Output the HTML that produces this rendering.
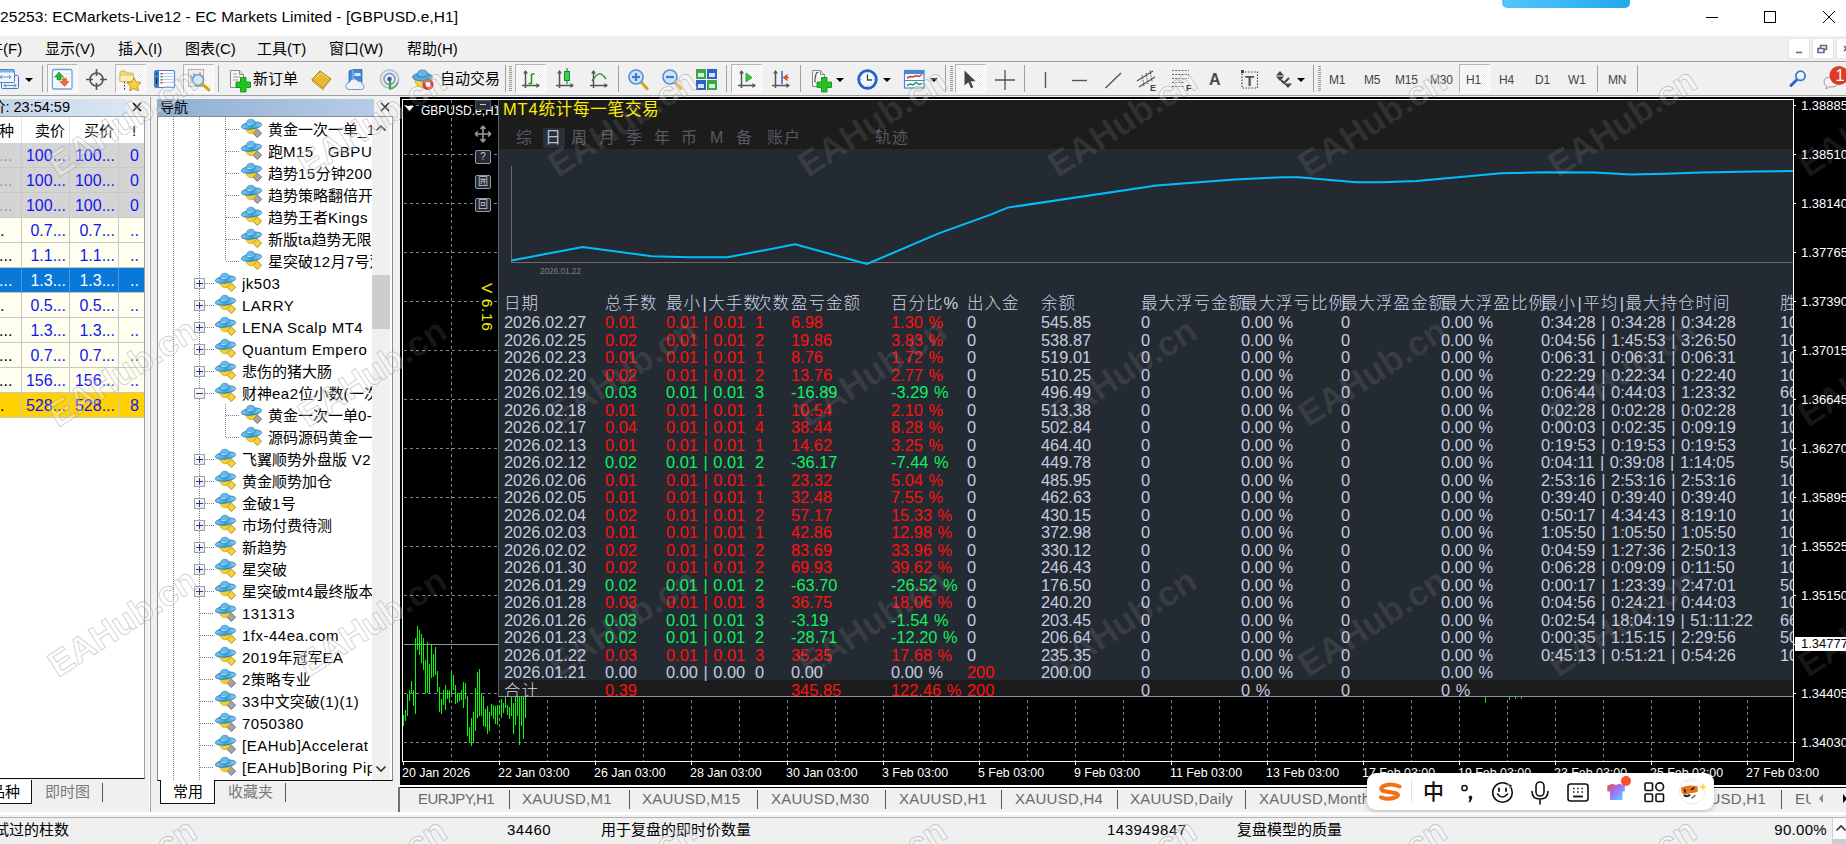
<!DOCTYPE html><html lang="zh"><head><meta charset="utf-8"><title>MT4</title><style>*{box-sizing:border-box;margin:0;padding:0}
html,body{width:1846px;height:844px;overflow:hidden;background:#f0f0f0}
body{font-family:"Liberation Sans","Noto Sans CJK SC",sans-serif;font-size:15px;color:#000}
#root{position:relative;width:1846px;height:844px;overflow:hidden;background:#f0f0f0}
.a{position:absolute;white-space:nowrap}
.t{position:absolute;white-space:nowrap;line-height:20px;height:20px}
svg{position:absolute;overflow:visible}
.pb{background:#f9f9f9;border:1px solid #b5b5b5;border-right-color:#fff;border-bottom-color:#fff;background-image:repeating-conic-gradient(#fff 0 25%,#ededed 0 50%);background-size:2px 2px}
.grip{width:3px;height:26px;background:repeating-linear-gradient(180deg,#9a9a9a 0 1px,transparent 1px 2px)}
.tf{font-size:12px;color:#444;letter-spacing:-0.2px}
.mh{font-size:15px;color:#000}
.mr{font-size:16px}
.tr{font-size:15px;line-height:22px;height:22px}
.vd{width:1px;background:repeating-linear-gradient(180deg,#808080 0 1px,transparent 1px 2px)}
.hd{height:1px;background:repeating-linear-gradient(90deg,#808080 0 1px,transparent 1px 2px)}
.pl{font-size:12px;color:#fff;line-height:16px;height:16px;font-family:"Liberation Sans",sans-serif}
.sb{width:16px;height:14px;border:1px solid #8f9ab0;border-radius:2px;color:#c0c6d4;font-size:10px;line-height:12px;text-align:center;background:#242a32}
.th{font-weight:300;font-size:16.500px;color:#ccd4e8;line-height:20px;letter-spacing:1px;font-family:"Liberation Sans","Noto Sans CJK SC",sans-serif}
.td{word-spacing:1px;font-size:16.400px;line-height:20px;font-family:"Liberation Sans",sans-serif}
.ct{font-size:15px;color:#6a6a6a;line-height:20px;letter-spacing:.25px}
.pr{font-size:13px}
.tm{font-size:12.400px}
.l{letter-spacing:.5px}
.bar{margin:0 .5px 0 1.5px}
</style></head><body><div id="root">
<div class="a" id="titlebar" style="left:0;top:0;width:1846px;height:36px;background:#fff">
  <div class="t" id="ttl" style="left:0;top:7px;font-size:15.5px;color:#000;letter-spacing:.085px">25253: ECMarkets-Live12 - EC Markets Limited - [GBPUSD.e,H1]</div>
  <div class="a" style="left:1502px;top:-6px;width:128px;height:14px;border-radius:5px;background:linear-gradient(90deg,#55c6fb,#1fa9ee)"></div>
  <svg width="140" height="20" style="left:1700px;top:8px" viewBox="0 0 140 20" fill="none" stroke="#000" stroke-width="1">
    <path d="M6 9.5h12"/><rect x="64.5" y="3.5" width="11" height="11"/><path d="M123 3l12 12M135 3l-12 12"/>
  </svg>
</div>

<div class="a" id="menubar" style="left:0;top:36px;width:1846px;height:25px;background:#f0f0f0">
  <div class="t" style="left:-12px;top:3px">件(F)</div>
  <div class="t" style="left:45px;top:3px">显示(V)</div>
  <div class="t" style="left:118px;top:3px">插入(I)</div>
  <div class="t" style="left:185px;top:3px">图表(C)</div>
  <div class="t" style="left:257px;top:3px">工具(T)</div>
  <div class="t" style="left:329px;top:3px">窗口(W)</div>
  <div class="t" style="left:407px;top:3px">帮助(H)</div>
  <div class="a" style="left:1788px;top:2px;width:22px;height:21px;background:#fff;border:1px solid #e4e4e4"></div>
  <div class="a" style="left:1812px;top:2px;width:22px;height:21px;background:#fff;border:1px solid #e4e4e4"></div>
  <div class="a" style="left:1836px;top:2px;width:22px;height:21px;background:#fff;border:1px solid #e4e4e4"></div>
  <svg width="60" height="21" style="left:1788px;top:2px" viewBox="0 0 60 21" fill="none" stroke="#5a6b8c" stroke-width="1.6">
    <path d="M8 14.5h6"/><path d="M30 10.5h6v4h-6zM32.5 10v-2.5h6v4h-2.5"/><path d="M56 8l5 5M61 8l-5 5"/>
  </svg>
</div>
<div class="a" style="left:0;top:61px;width:1846px;height:1px;background:#a0a0a0"></div>

<div class="a" id="toolbar" style="left:0;top:62px;width:1846px;height:33px;background:#f0f0f0">
<div class="a pb" style="left:47px;top:2px;width:31px;height:29px"></div>
<div class="a pb" style="left:115px;top:2px;width:31px;height:29px"></div>
<div class="a pb" style="left:183px;top:2px;width:31px;height:29px"></div>
<div class="a pb" style="left:515px;top:2px;width:31px;height:29px"></div>
<div class="a pb" style="left:731px;top:2px;width:31px;height:29px"></div>
<div class="a pb" style="left:955px;top:2px;width:31px;height:29px"></div>
<div class="a pb" style="left:1459px;top:2px;width:31px;height:29px"></div>
<div class="a" style="left:42px;top:3px;width:1px;height:27px;background:#a0a0a0"></div>
<div class="a" style="left:218px;top:3px;width:1px;height:27px;background:#a0a0a0"></div>
<div class="a" style="left:505px;top:3px;width:1px;height:27px;background:#a0a0a0"></div>
<div class="a" style="left:618px;top:3px;width:1px;height:27px;background:#a0a0a0"></div>
<div class="a" style="left:726px;top:3px;width:1px;height:27px;background:#a0a0a0"></div>
<div class="a" style="left:800px;top:3px;width:1px;height:27px;background:#a0a0a0"></div>
<div class="a" style="left:945px;top:3px;width:1px;height:27px;background:#a0a0a0"></div>
<div class="a" style="left:1024px;top:3px;width:1px;height:27px;background:#a0a0a0"></div>
<div class="a" style="left:1313px;top:3px;width:1px;height:27px;background:#a0a0a0"></div>
<div class="a" style="left:1597px;top:3px;width:1px;height:27px;background:#a0a0a0"></div>
<div class="a" style="left:1637px;top:3px;width:1px;height:27px;background:#a0a0a0"></div>
<div class="a grip" style="left:509px;top:4px"></div>
<div class="a grip" style="left:950px;top:4px"></div>
<div class="a grip" style="left:1318px;top:4px"></div>
<svg width="8" height="4" style="left:25px;top:16px" viewBox="0 0 8 4"><path d="M0 0h8l-4 4z" fill="#000"/></svg>
<svg width="8" height="4" style="left:836px;top:16px" viewBox="0 0 8 4"><path d="M0 0h8l-4 4z" fill="#000"/></svg>
<svg width="8" height="4" style="left:883px;top:16px" viewBox="0 0 8 4"><path d="M0 0h8l-4 4z" fill="#000"/></svg>
<svg width="8" height="4" style="left:930px;top:16px" viewBox="0 0 8 4"><path d="M0 0h8l-4 4z" fill="#000"/></svg>
<svg width="8" height="4" style="left:1297px;top:16px" viewBox="0 0 8 4"><path d="M0 0h8l-4 4z" fill="#000"/></svg>
<svg width="24" height="24" style="left:-3px;top:6px" viewBox="0 0 24 24"><rect x="4.5" y="7.500" width="17" height="13" rx="1" fill="#e9f1fb" stroke="#3f78c0"/><rect x="0.500" y="1.500" width="17" height="13" rx="1" fill="#f4f8fd" stroke="#4a86cc"/><path d="M1 2h16v2.500H1z" fill="#7fb0e6"/><path d="M3 9h11M3 9l2-2M3 9l2 2M14 9l-2-2M14 9l-2 2M7 17.500h12M7 17.500l2-2M7 17.500l2 2M19 17.500l-2-2M19 17.500l-2 2" stroke="#5c8fc8" fill="none"/></svg>
<svg width="21" height="21" style="left:52px;top:7px" viewBox="0 0 21 21"><rect x="0.500" y="0.500" width="19.500" height="19.500" rx="1.500" fill="#fdfdfd" stroke="#6aa2e0" stroke-width="1.300"/><path d="M11 5h7M11 8h7M11 11h7M3 14h7M3 17h7" stroke="#d8dde6"/><path d="M7 3l4.500 5h-2.500v3h-4v-3h-2.500z" fill="#2fae3a" stroke="#1a8a28" stroke-width=".6"/><path d="M12.500 17.500l4.500-5h-2.500v-3h-4v3h-2.500z" fill="#f06a3c" stroke="#c84a20" stroke-width=".6"/></svg>
<svg width="22" height="22" style="left:86px;top:7px" viewBox="0 0 22 22"><circle cx="10.500" cy="10.500" r="6.500" fill="none" stroke="#555" stroke-width="1.700"/><path d="M10.500 0v7M10.500 14v7M0 10.500h7M14 10.500h7" stroke="#555" stroke-width="1.700"/></svg>
<svg width="23" height="23" style="left:119px;top:7px" viewBox="0 0 23 23"><path d="M1 3.500q0-1.500 1.500-1.500h4l1.500 2h5.500q1 0 1 1v7.500H1z" fill="#f5dc7a" stroke="#c9a63a" stroke-width=".8"/><path d="M1 6h13.500v6.500H1z" fill="#fbeeb0" stroke="#c9a63a" stroke-width=".6"/><path d="M5.500 13v8" stroke="#333" stroke-dasharray="1.500 1.500"/><path d="M15 8.500l2.200 4.400 4.800.7-3.500 3.400.8 4.800-4.300-2.300-4.300 2.300.8-4.800-3.500-3.400 4.800-.7z" fill="#f7d23c" stroke="#b98a12" stroke-width=".9"/></svg>
<svg width="21" height="19" style="left:154px;top:8px" viewBox="0 0 21 19"><rect x="0.500" y="0.500" width="20" height="17" rx="1.500" fill="#fafcff" stroke="#4a86d0" stroke-width="1.200"/><path d="M1 1h4v16H1z" fill="#3d7bd0"/><path d="M7 3.500h12M7 6.500h12M7 9.500h12M7 12.500h12" stroke="#b9cdee"/><path d="M6.500 3h2v1.500h-2zM6.500 12h2v1.500h-2z" fill="#e0352b"/><path d="M6.500 6h2v1.500h-2zM6.500 9h2v1.500h-2z" fill="#3a9a3a"/><path d="M2.500 3v1.500M2.500 8v6" stroke="#123" stroke-width="1.200"/></svg>
<svg width="26" height="24" style="left:187px;top:6px" viewBox="0 0 26 24"><rect x="1.500" y="1.500" width="15" height="17" fill="#efefe6" stroke="#b9b39a"/><path d="M4 7v8M7 5v9M10 6v7M13 4v8" stroke="#889" stroke-width="1"/><circle cx="11" cy="12" r="5.500" fill="#d6e8fb" fill-opacity=".85" stroke="#6a9ad8" stroke-width="1.600"/><path d="M15 16l7 6" stroke="#d9a520" stroke-width="3" stroke-linecap="round"/></svg>
<svg width="22" height="23" style="left:229px;top:7px" viewBox="0 0 22 23"><path d="M1.500 1.500h9l4 4v13h-13z" fill="#f6f6f6" stroke="#8a8a8a"/><path d="M10.500 1.500v4h4" fill="#ddd" stroke="#8a8a8a"/><path d="M4 5h4M4 8h7M4 11h5" stroke="#999"/><path d="M11.500 8.500h5.500v4.500h4.500v5.500h-4.500v4.500h-5.500v-4.500h-4.500v-5.500h4.500z" fill="#22c322" stroke="#0b8a0b" stroke-width=".8"/></svg>
<div class="t" style="left:253px;top:7px;font-size:15px">新订单</div>
<svg width="21" height="20" style="left:311px;top:8px" viewBox="0 0 21 20"><path d="M1 9.500L9 1l11 8-8 9.500z" fill="#e9b832" stroke="#a87810" stroke-width="1"/><path d="M1 9.500l11 9 .5 1.500L1.500 11.500z" fill="#fff3c0" stroke="#a87810" stroke-width=".7"/><path d="M5 8l5-5 7 5" stroke="#f9dd80" fill="none"/></svg>
<svg width="21" height="22" style="left:345px;top:7px" viewBox="0 0 21 22"><path d="M4 2l4-1.500h9v13H4z" fill="#3e8ad8" stroke="#2a6ab8" stroke-width=".8"/><path d="M8 .5v13" stroke="#9cc4f0"/><path d="M9.500 4h6v3h-6z" fill="#d8e9fb"/><path d="M4 20.500a3.500 3.500 0 0 1 .5-7 4.500 4.500 0 0 1 8.500-1 3 3 0 0 1 4 2.500 2.800 2.800 0 0 1-.5 5.500z" fill="#eef3fa" stroke="#7a98c8" stroke-width="1"/></svg>
<svg width="22" height="22" style="left:379px;top:7px" viewBox="0 0 22 22"><circle cx="10.500" cy="10" r="9" fill="none" stroke="#b9c3d4" stroke-width="2"/><circle cx="10.500" cy="10" r="5.500" fill="none" stroke="#8a9cc0" stroke-width="1.800"/><circle cx="10.500" cy="10" r="2.300" fill="#2a5fb8"/><path d="M11 12v8.500" stroke="#2fae3a" stroke-width="2.200"/><path d="M11 20q6-1 8-7" stroke="#5aa86a" stroke-width="1.600" fill="none"/></svg>
<svg width="22" height="22" style="left:412px;top:7px" viewBox="0 0 22 22"><path d="M2 9q9 6 18 0l-2.500 7q-6.500 5-13 0z" fill="#f3d44a" stroke="#c9a020" stroke-width=".7"/><ellipse cx="10.500" cy="8" rx="10" ry="4" fill="#5aa6dc" stroke="#2f78b4" stroke-width=".8"/><path d="M5 7q0-6 5.500-6T16 7q-5.500 2.500-11 0z" fill="#6ab4e6" stroke="#2f78b4" stroke-width=".8"/><circle cx="16" cy="15.500" r="5.500" fill="#e0392b"/><rect x="13.800" y="13.300" width="4.400" height="4.400" fill="#fff"/></svg>
<div class="t" style="left:440px;top:7px;font-size:15px">自动交易</div>
<svg width="19" height="20" style="left:522px;top:8px" viewBox="0 0 19 20"><path d="M3.500 1v17M0 15.500h17" stroke="#555" stroke-width="1.500" fill="none"/><path d="M3.500 0l-2.500 3.500h5zM18 15.500l-3.500-2.500v5z" fill="#555"/><path d="M9.500 4v10M9.500 4h3M6.500 13.500h3" stroke="#1f9a30" stroke-width="1.600" fill="none"/></svg>
<svg width="19" height="22" style="left:556px;top:6px" viewBox="0 0 19 22"><g transform="translate(0,2)"><path d="M3.500 1v17M0 15.500h17" stroke="#555" stroke-width="1.500" fill="none"/><path d="M3.500 0l-2.500 3.500h5zM18 15.500l-3.500-2.500v5z" fill="#555"/></g><path d="M11 0v16" stroke="#1a8a28" stroke-width="1.200"/><rect x="8.500" y="3.500" width="5" height="9" fill="#35d24a" stroke="#1a8a28"/></svg>
<svg width="19" height="20" style="left:590px;top:8px" viewBox="0 0 19 20"><path d="M3.500 1v17M0 15.500h17" stroke="#555" stroke-width="1.500" fill="none"/><path d="M3.500 0l-2.500 3.500h5zM18 15.500l-3.500-2.500v5z" fill="#555"/><path d="M2 11q6-9 9-7t5 5" stroke="#2a8a3a" stroke-width="1.500" fill="none"/></svg>
<svg width="21" height="22" style="left:628px;top:7px" viewBox="0 0 21 22"><path d="M13 13l6 6.500" stroke="#d2a526" stroke-width="3.200" stroke-linecap="round"/><circle cx="8" cy="8" r="7" fill="#cfe3fa" stroke="#4e8fd8" stroke-width="1.600"/><path d="M4 8h8" stroke="#3a7acc" stroke-width="2.200"/><path d="M8 4v8" stroke="#3a7acc" stroke-width="2.200"/></svg>
<svg width="21" height="22" style="left:662px;top:7px" viewBox="0 0 21 22"><path d="M13 13l6 6.500" stroke="#d2a526" stroke-width="3.200" stroke-linecap="round"/><circle cx="8" cy="8" r="7" fill="#cfe3fa" stroke="#4e8fd8" stroke-width="1.600"/><path d="M4 8h8" stroke="#3a7acc" stroke-width="2.200"/></svg>
<svg width="21" height="21" style="left:696px;top:7px" viewBox="0 0 21 21"><rect x="0" y="0" width="10" height="10" fill="#3aa83a"/><rect x="11" y="0" width="10" height="10" fill="#2a62c8"/><rect x="0" y="11" width="10" height="10" fill="#2a62c8"/><rect x="11" y="11" width="10" height="10" fill="#3aa83a"/><path d="M2 4h6v4H2zM13 4h6v4h-6zM2 15h6v4H2zM13 15h6v4h-6z" fill="#e8f2ff" fill-opacity=".9"/></svg>
<svg width="19" height="20" style="left:738px;top:8px" viewBox="0 0 19 20"><path d="M3.500 1v17M0 15.500h17" stroke="#555" stroke-width="1.500" fill="none"/><path d="M3.500 0l-2.500 3.500h5zM18 15.500l-3.500-2.500v5z" fill="#555"/><path d="M8 3v9l6-4.500z" fill="#35c83a" stroke="#1f9a30" stroke-width=".8"/></svg>
<svg width="19" height="20" style="left:772px;top:8px" viewBox="0 0 19 20"><path d="M3.500 1v17M0 15.500h17" stroke="#555" stroke-width="1.500" fill="none"/><path d="M3.500 0l-2.500 3.500h5zM18 15.500l-3.500-2.500v5z" fill="#555"/><path d="M10 1v13" stroke="#2a6ab8" stroke-width="1.500"/><path d="M17 7.500h-5M15 5l-3.500 2.500 3.500 2.500z" stroke="#e0552b" stroke-width="1.200" fill="#e0552b"/></svg>
<svg width="22" height="23" style="left:811px;top:7px" viewBox="0 0 22 23"><path d="M1.500 1.500h8l4 4v12h-12z" fill="#f6f6f6" stroke="#8a8a8a"/><path d="M9.500 1.500v4h4" fill="#ddd" stroke="#8a8a8a"/><path d="M5 13q-1.500 0-1-3t1-5q.5-2 2.500-1.500" stroke="#555" fill="none" stroke-width="1.200"/><path d="M10.500 8.500h5.500v4.500h4.500v5.500h-4.500v4.500h-5.500v-4.500h-4.500v-5.500h4.500z" fill="#22c322" stroke="#0b8a0b" stroke-width=".8"/></svg>
<svg width="21" height="21" style="left:857px;top:7px" viewBox="0 0 21 21"><circle cx="10.500" cy="10.500" r="8.800" fill="#f4f8fc" stroke="#1f66c8" stroke-width="2.800"/><path d="M10.500 5.500v5.500h4.500" stroke="#444" stroke-width="1.300" fill="none"/><path d="M10.500 3.500v1M10.500 16.500v1M3.500 10.500h1M16.500 10.500h1" stroke="#8ab" /></svg>
<svg width="21" height="19" style="left:904px;top:8px" viewBox="0 0 21 19"><rect x="0.500" y="0.500" width="19.500" height="17.500" fill="#fdfdfd" stroke="#4a86d0" stroke-width="1.200"/><path d="M1 1h19v3H1z" fill="#4a86d0"/><path d="M1 10.500h19" stroke="#4a86d0"/><path d="M3 8l3-1.500 3 .5 3-1.500 3 1 3-2" stroke="#c0392b" stroke-width="1.500" fill="none"/><path d="M3 15.500l3-1.500 3 1 3-2.500 3 2 3-1" stroke="#2a9a3a" stroke-width="1.500" fill="none"/></svg>
<svg width="13" height="19" style="left:964px;top:8px" viewBox="0 0 13 19"><path d="M.5.500v15l3.800-3.300 2.700 6 2.300-1-2.700-6h5z" fill="#444"/></svg>
<svg width="20" height="20" style="left:995px;top:8px" viewBox="0 0 20 20"><path d="M10 0v20M0 10h20" stroke="#555" stroke-width="1.300"/></svg>
<svg width="3" height="17" style="left:1044px;top:10px" viewBox="0 0 3 17"><path d="M1.500 0v16" stroke="#555" stroke-width="1.400"/></svg>
<svg width="16" height="3" style="left:1072px;top:17px" viewBox="0 0 16 3"><path d="M0 1.500h15" stroke="#555" stroke-width="1.400"/></svg>
<svg width="17" height="17" style="left:1105px;top:10px" viewBox="0 0 17 17"><path d="M0.500 16L16 1" stroke="#555" stroke-width="1.400"/></svg>
<svg width="23" height="22" style="left:1136px;top:7px" viewBox="0 0 23 22"><path d="M1 12L17 2M3 18L19 8" stroke="#555" stroke-width="1.300"/><path d="M6 6l2 11M10 4l2 11M14 1.500l2 11" stroke="#555" stroke-width="1" stroke-dasharray="1.500 1"/><text x="14" y="21.500" font-family="Liberation Sans,sans-serif" font-size="9" font-weight="bold" fill="#444">E</text></svg>
<svg width="22" height="22" style="left:1172px;top:7px" viewBox="0 0 22 22"><path d="M0 1.500h17M0 5.500h17M0 9.500h17M0 13.500h12M0 17.500h12" stroke="#666" stroke-width="1.200" stroke-dasharray="2 1.200"/><text x="14" y="21.500" font-family="Liberation Sans,sans-serif" font-size="9" font-weight="bold" fill="#444">F</text></svg>
<div class="t" style="left:1209px;top:8px;font-size:16px;font-weight:bold;color:#4a4a4a;line-height:20px">A</div>
<svg width="18" height="19" style="left:1241px;top:8px" viewBox="0 0 18 19"><rect x="1" y="2" width="15.500" height="16" fill="none" stroke="#444" stroke-width="1.200" stroke-dasharray="1.500 1.500"/><rect x="0" y="0" width="3" height="3" fill="#444"/><text x="4" y="15.500" font-family="Liberation Sans,sans-serif" font-size="15" font-weight="bold" fill="#555">T</text></svg>
<svg width="18" height="19" style="left:1275px;top:8px" viewBox="0 0 18 19"><path d="M5 1l4 4.500H1z" fill="#444"/><path d="M5 12l4-4.500H1z" fill="#444" transform="translate(0,-1)"/><path d="M5 9l3 3 5-5" stroke="#444" stroke-width="2" fill="none" transform="translate(1,1)"/><path d="M13 18l4-4.500H9z" fill="#444"/></svg>
<div class="t tf" style="left:1329px;top:8px">M1</div>
<div class="t tf" style="left:1364px;top:8px">M5</div>
<div class="t tf" style="left:1395px;top:8px">M15</div>
<div class="t tf" style="left:1430px;top:8px">M30</div>
<div class="t tf" style="left:1466px;top:8px">H1</div>
<div class="t tf" style="left:1499px;top:8px">H4</div>
<div class="t tf" style="left:1535px;top:8px">D1</div>
<div class="t tf" style="left:1568px;top:8px">W1</div>
<div class="t tf" style="left:1608px;top:8px">MN</div>
<svg width="19" height="18" style="left:1789px;top:8px" viewBox="0 0 19 18"><path d="M2 15.500l6.500-6.500" stroke="#2f62c8" stroke-width="3" stroke-linecap="round"/><circle cx="11.500" cy="5.800" r="4.600" fill="#eef6ff" stroke="#3f7ad8" stroke-width="1.800"/></svg>
<svg width="26" height="26" style="left:1822px;top:4px" viewBox="0 0 26 26"><path d="M2 16q0-5 7-5t7 5-7 5q-1 0-2-.3l-3 2.300.5-3.300Q2 18.500 2 16z" fill="#f4f4f4" stroke="#9a9a9a" stroke-width="1"/><circle cx="17" cy="9.500" r="9.500" fill="#e03a22"/><text x="13.500" y="15" font-family="Liberation Sans,sans-serif" font-size="16" fill="#fff">1</text></svg>
</div>
<div class="a" style="left:0;top:95px;width:1846px;height:1px;background:#a0a0a0"></div>
<div class="a" id="market" style="left:0;top:97px;width:152px;height:715px;background:#f0f0f0">
<div class="a" style="left:0;top:2px;width:127px;height:17px;background:linear-gradient(90deg,#c3d4e8,#dbe6f3)"></div>
<div class="t" style="left:-9px;top:0px;font-size:14.500px;line-height:20px">价: 23:54:59</div>
<svg width="10" height="10" style="left:132px;top:5px" viewBox="0 0 10 10"><path d="M1 1l8 8M9 1l-8 8" stroke="#000" stroke-width="1.500"/></svg>
<div class="a" style="left:0;top:19px;width:145px;height:663px;background:#fff;border-top:1px solid #a0a0a0;border-right:1px solid #a0a0a0;border-bottom:1px solid #111"></div>
<div class="t mh" style="left:-1px;top:24px">种</div><div class="t mh" style="left:35px;top:24px">卖价</div><div class="t mh" style="left:84px;top:24px">买价</div><div class="t mh" style="left:132px;top:24px">!</div>
<div class="a" style="left:21px;top:20px;width:1px;height:26px;background:#e5e5e5"></div>
<div class="a" style="left:69px;top:20px;width:1px;height:26px;background:#e5e5e5"></div>
<div class="a" style="left:118px;top:20px;width:1px;height:26px;background:#e5e5e5"></div>
<div class="a" style="left:0;top:46px;width:144px;height:25px;background:#d4d4d4;border-bottom:1px solid #c8c8c8"></div>
<div class="a" style="left:21px;top:46px;width:1px;height:25px;background:#c8c8c8"></div>
<div class="a" style="left:69px;top:46px;width:1px;height:25px;background:#c8c8c8"></div>
<div class="a" style="left:118px;top:46px;width:1px;height:25px;background:#c8c8c8"></div>
<div class="t mr" style="left:-1px;top:49px;color:#9a9a9a">...</div>
<div class="t mr" style="left:22px;top:49px;width:44px;text-align:right;color:#1414f0">100...</div>
<div class="t mr" style="left:71px;top:49px;width:44px;text-align:right;color:#1414f0">100...</div>
<div class="t mr" style="left:119px;top:49px;width:20px;text-align:right;color:#1414f0">0</div>
<div class="a" style="left:0;top:71px;width:144px;height:25px;background:#d4d4d4;border-bottom:1px solid #c8c8c8"></div>
<div class="a" style="left:21px;top:71px;width:1px;height:25px;background:#c8c8c8"></div>
<div class="a" style="left:69px;top:71px;width:1px;height:25px;background:#c8c8c8"></div>
<div class="a" style="left:118px;top:71px;width:1px;height:25px;background:#c8c8c8"></div>
<div class="t mr" style="left:-1px;top:74px;color:#9a9a9a">...</div>
<div class="t mr" style="left:22px;top:74px;width:44px;text-align:right;color:#1414f0">100...</div>
<div class="t mr" style="left:71px;top:74px;width:44px;text-align:right;color:#1414f0">100...</div>
<div class="t mr" style="left:119px;top:74px;width:20px;text-align:right;color:#1414f0">0</div>
<div class="a" style="left:0;top:96px;width:144px;height:25px;background:#d4d4d4;border-bottom:1px solid #c8c8c8"></div>
<div class="a" style="left:21px;top:96px;width:1px;height:25px;background:#c8c8c8"></div>
<div class="a" style="left:69px;top:96px;width:1px;height:25px;background:#c8c8c8"></div>
<div class="a" style="left:118px;top:96px;width:1px;height:25px;background:#c8c8c8"></div>
<div class="t mr" style="left:-1px;top:99px;color:#9a9a9a">...</div>
<div class="t mr" style="left:22px;top:99px;width:44px;text-align:right;color:#1414f0">100...</div>
<div class="t mr" style="left:71px;top:99px;width:44px;text-align:right;color:#1414f0">100...</div>
<div class="t mr" style="left:119px;top:99px;width:20px;text-align:right;color:#1414f0">0</div>
<div class="a" style="left:0;top:121px;width:144px;height:25px;background:#fffff0;border-bottom:1px solid #c8c8c8"></div>
<div class="a" style="left:21px;top:121px;width:1px;height:25px;background:#c8c8c8"></div>
<div class="a" style="left:69px;top:121px;width:1px;height:25px;background:#c8c8c8"></div>
<div class="a" style="left:118px;top:121px;width:1px;height:25px;background:#c8c8c8"></div>
<div class="t mr" style="left:0px;top:124px;color:#000">.</div>
<div class="t mr" style="left:22px;top:124px;width:44px;text-align:right;color:#1414f0">0.7...</div>
<div class="t mr" style="left:71px;top:124px;width:44px;text-align:right;color:#1414f0">0.7...</div>
<div class="t mr" style="left:119px;top:124px;width:20px;text-align:right;color:#1414f0">..</div>
<div class="a" style="left:0;top:146px;width:144px;height:25px;background:#fffff0;border-bottom:1px solid #c8c8c8"></div>
<div class="a" style="left:21px;top:146px;width:1px;height:25px;background:#c8c8c8"></div>
<div class="a" style="left:69px;top:146px;width:1px;height:25px;background:#c8c8c8"></div>
<div class="a" style="left:118px;top:146px;width:1px;height:25px;background:#c8c8c8"></div>
<div class="t mr" style="left:-1px;top:149px;color:#000">...</div>
<div class="t mr" style="left:22px;top:149px;width:44px;text-align:right;color:#1414f0">1.1...</div>
<div class="t mr" style="left:71px;top:149px;width:44px;text-align:right;color:#1414f0">1.1...</div>
<div class="t mr" style="left:119px;top:149px;width:20px;text-align:right;color:#1414f0">..</div>
<div class="a" style="left:0;top:171px;width:144px;height:25px;background:#0a78d7;border-bottom:1px solid #c8c8c8"></div>
<div class="a" style="left:21px;top:171px;width:1px;height:25px;background:#4a98e0"></div>
<div class="a" style="left:69px;top:171px;width:1px;height:25px;background:#4a98e0"></div>
<div class="a" style="left:118px;top:171px;width:1px;height:25px;background:#4a98e0"></div>
<div class="t mr" style="left:-1px;top:174px;color:#fff">...</div>
<div class="t mr" style="left:22px;top:174px;width:44px;text-align:right;color:#fff">1.3...</div>
<div class="t mr" style="left:71px;top:174px;width:44px;text-align:right;color:#fff">1.3...</div>
<div class="t mr" style="left:119px;top:174px;width:20px;text-align:right;color:#fff">..</div>
<div class="a" style="left:0;top:196px;width:144px;height:25px;background:#fffff0;border-bottom:1px solid #c8c8c8"></div>
<div class="a" style="left:21px;top:196px;width:1px;height:25px;background:#c8c8c8"></div>
<div class="a" style="left:69px;top:196px;width:1px;height:25px;background:#c8c8c8"></div>
<div class="a" style="left:118px;top:196px;width:1px;height:25px;background:#c8c8c8"></div>
<div class="t mr" style="left:0px;top:199px;color:#000">.</div>
<div class="t mr" style="left:22px;top:199px;width:44px;text-align:right;color:#1414f0">0.5...</div>
<div class="t mr" style="left:71px;top:199px;width:44px;text-align:right;color:#1414f0">0.5...</div>
<div class="t mr" style="left:119px;top:199px;width:20px;text-align:right;color:#1414f0">..</div>
<div class="a" style="left:0;top:221px;width:144px;height:25px;background:#fffff0;border-bottom:1px solid #c8c8c8"></div>
<div class="a" style="left:21px;top:221px;width:1px;height:25px;background:#c8c8c8"></div>
<div class="a" style="left:69px;top:221px;width:1px;height:25px;background:#c8c8c8"></div>
<div class="a" style="left:118px;top:221px;width:1px;height:25px;background:#c8c8c8"></div>
<div class="t mr" style="left:-1px;top:224px;color:#000">...</div>
<div class="t mr" style="left:22px;top:224px;width:44px;text-align:right;color:#1414f0">1.3...</div>
<div class="t mr" style="left:71px;top:224px;width:44px;text-align:right;color:#1414f0">1.3...</div>
<div class="t mr" style="left:119px;top:224px;width:20px;text-align:right;color:#1414f0">..</div>
<div class="a" style="left:0;top:246px;width:144px;height:25px;background:#fffff0;border-bottom:1px solid #c8c8c8"></div>
<div class="a" style="left:21px;top:246px;width:1px;height:25px;background:#c8c8c8"></div>
<div class="a" style="left:69px;top:246px;width:1px;height:25px;background:#c8c8c8"></div>
<div class="a" style="left:118px;top:246px;width:1px;height:25px;background:#c8c8c8"></div>
<div class="t mr" style="left:-1px;top:249px;color:#000">...</div>
<div class="t mr" style="left:22px;top:249px;width:44px;text-align:right;color:#1414f0">0.7...</div>
<div class="t mr" style="left:71px;top:249px;width:44px;text-align:right;color:#1414f0">0.7...</div>
<div class="t mr" style="left:119px;top:249px;width:20px;text-align:right;color:#1414f0">..</div>
<div class="a" style="left:0;top:271px;width:144px;height:25px;background:#fffff0;border-bottom:1px solid #c8c8c8"></div>
<div class="a" style="left:21px;top:271px;width:1px;height:25px;background:#c8c8c8"></div>
<div class="a" style="left:69px;top:271px;width:1px;height:25px;background:#c8c8c8"></div>
<div class="a" style="left:118px;top:271px;width:1px;height:25px;background:#c8c8c8"></div>
<div class="t mr" style="left:-1px;top:274px;color:#000">...</div>
<div class="t mr" style="left:22px;top:274px;width:44px;text-align:right;color:#1414f0">156...</div>
<div class="t mr" style="left:71px;top:274px;width:44px;text-align:right;color:#1414f0">156...</div>
<div class="t mr" style="left:119px;top:274px;width:20px;text-align:right;color:#1414f0">..</div>
<div class="a" style="left:0;top:296px;width:144px;height:25px;background:#ffd200;border-bottom:1px solid #c8c8c8"></div>
<div class="a" style="left:21px;top:296px;width:1px;height:25px;background:#c8c8c8"></div>
<div class="a" style="left:69px;top:296px;width:1px;height:25px;background:#c8c8c8"></div>
<div class="a" style="left:118px;top:296px;width:1px;height:25px;background:#c8c8c8"></div>
<div class="t mr" style="left:0px;top:299px;color:#000">.</div>
<div class="t mr" style="left:22px;top:299px;width:44px;text-align:right;color:#1414f0">528...</div>
<div class="t mr" style="left:71px;top:299px;width:44px;text-align:right;color:#1414f0">528...</div>
<div class="t mr" style="left:119px;top:299px;width:20px;text-align:right;color:#1414f0">8</div>
<div class="a" style="left:-2px;top:683px;width:34px;height:24px;background:#fff;border:1px solid #111;border-top:none"></div>
<div class="t" style="left:-10px;top:685px;font-size:15px">品种</div>
<div class="t" style="left:45px;top:685px;font-size:15px;color:#7a7a7a">即时图</div>
<div class="a" style="left:102px;top:686px;width:1px;height:19px;background:#555"></div>
</div>
<div class="a" style="left:149px;top:97px;width:1px;height:715px;background:#fff"></div>
<div class="a" style="left:150px;top:97px;width:1px;height:715px;background:#a0a0a0"></div>
<div class="a" id="navigator" style="left:155px;top:97px;width:245px;height:715px;background:#f0f0f0">
<div class="a" style="left:2px;top:2px;width:217px;height:17px;background:linear-gradient(90deg,#8faed2,#b7cce6)"></div>
<div class="t" style="left:5px;top:0px;font-size:14px;line-height:20px">导航</div>
<svg width="10" height="10" style="left:225px;top:5px" viewBox="0 0 10 10"><path d="M1 1l8 8M9 1l-8 8" stroke="#000" stroke-width="1.500"/></svg>
<svg width="0" height="0" style="left:0;top:0"><defs><linearGradient id="hb" x1="0" y1="0" x2="1" y2="0"><stop offset="0" stop-color="#7ccdf8"/><stop offset=".5" stop-color="#2f9fd8"/><stop offset="1" stop-color="#8ad4fa"/></linearGradient></defs></svg>
<div class="a" id="tree" style="left:2px;top:19px;width:236px;height:665px;background:#fff;border:1px solid #8a8a8a;border-bottom-color:#111;overflow:hidden">
<div class="a" style="left:214px;top:0;width:18px;height:663px;background:#f0f0f0"></div>
<div class="a" style="left:214px;top:158px;width:18px;height:54px;background:#cdcdcd"></div>
<svg width="10" height="6" style="left:218px;top:8px" viewBox="0 0 10 6"><path d="M.5 5.500l4.500-4.500 4.500 4.500" stroke="#333" stroke-width="1.600" fill="none"/></svg>
<svg width="10" height="6" style="left:218px;top:649px" viewBox="0 0 10 6"><path d="M.5 .5l4.500 4.500 4.500-4.500" stroke="#333" stroke-width="1.600" fill="none"/></svg>
<div class="a vd" style="left:15px;top:0px;height:664px"></div>
<div class="a vd" style="left:41px;top:0px;height:664px"></div>
<div class="a vd" style="left:67px;top:0px;height:144px"></div>
<div class="a vd" style="left:67px;top:287px;height:33px"></div>
<div class="a hd" style="left:68px;top:12px;width:13px"></div>
<svg width="23" height="20" style="left:83px;top:2px" viewBox="0 0 23 20"><path d="M16.300 9.900l4.300 4.300-4.300 4.300-4.300-4.300z" fill="#a4a4a4" stroke="#666" stroke-width=".9"/><path d="M4.600 9q.6 5.300 5.400 5.700 2 0 3.400-1.700l3.300-4.500z" fill="#f5cf2e" stroke="#c79a14" stroke-width=".6"/><ellipse cx="10.500" cy="6.600" rx="10.200" ry="3.500" transform="rotate(-7 10.500 6.600)" fill="url(#hb)" stroke="#2a6f9e" stroke-width=".8"/><path d="M5.300 6q-.3-5.600 4.500-5.800 4.700.1 4.500 5-4.500 2.600-9 .8z" fill="#62b8ea" stroke="#2f7fb5" stroke-width=".6"/><path d="M6.300 5.300q2 .8 4-.2" stroke="#c8ecff" stroke-width=".9" fill="none"/></svg>
<div class="t tr" style="left:110px;top:2px;max-width:104px;overflow:hidden">黄金一次一单<span class="l">_1</span></div>
<div class="a hd" style="left:68px;top:34px;width:13px"></div>
<svg width="23" height="20" style="left:83px;top:24px" viewBox="0 0 23 20"><path d="M16.300 9.900l4.300 4.300-4.300 4.300-4.300-4.300z" fill="#a4a4a4" stroke="#666" stroke-width=".9"/><path d="M4.600 9q.6 5.300 5.400 5.700 2 0 3.400-1.700l3.300-4.500z" fill="#f5cf2e" stroke="#c79a14" stroke-width=".6"/><ellipse cx="10.500" cy="6.600" rx="10.200" ry="3.500" transform="rotate(-7 10.500 6.600)" fill="url(#hb)" stroke="#2a6f9e" stroke-width=".8"/><path d="M5.300 6q-.3-5.600 4.500-5.800 4.700.1 4.500 5-4.500 2.600-9 .8z" fill="#62b8ea" stroke="#2f7fb5" stroke-width=".6"/><path d="M6.300 5.300q2 .8 4-.2" stroke="#c8ecff" stroke-width=".9" fill="none"/></svg>
<div class="t tr" style="left:110px;top:24px;max-width:104px;overflow:hidden">跑<span class="l">M15&nbsp;&nbsp; GBPUS</span></div>
<div class="a hd" style="left:68px;top:56px;width:13px"></div>
<svg width="23" height="20" style="left:83px;top:46px" viewBox="0 0 23 20"><path d="M16.300 9.900l4.300 4.300-4.300 4.300-4.300-4.300z" fill="#a4a4a4" stroke="#666" stroke-width=".9"/><path d="M4.600 9q.6 5.300 5.400 5.700 2 0 3.400-1.700l3.300-4.500z" fill="#f5cf2e" stroke="#c79a14" stroke-width=".6"/><ellipse cx="10.500" cy="6.600" rx="10.200" ry="3.500" transform="rotate(-7 10.500 6.600)" fill="url(#hb)" stroke="#2a6f9e" stroke-width=".8"/><path d="M5.300 6q-.3-5.600 4.500-5.800 4.700.1 4.500 5-4.500 2.600-9 .8z" fill="#62b8ea" stroke="#2f7fb5" stroke-width=".6"/><path d="M6.300 5.300q2 .8 4-.2" stroke="#c8ecff" stroke-width=".9" fill="none"/></svg>
<div class="t tr" style="left:110px;top:46px;max-width:104px;overflow:hidden">趋势<span class="l">15</span>分钟<span class="l">200</span></div>
<div class="a hd" style="left:68px;top:78px;width:13px"></div>
<svg width="23" height="20" style="left:83px;top:68px" viewBox="0 0 23 20"><path d="M16.300 9.900l4.300 4.300-4.300 4.300-4.300-4.300z" fill="#a4a4a4" stroke="#666" stroke-width=".9"/><path d="M4.600 9q.6 5.300 5.400 5.700 2 0 3.400-1.700l3.300-4.500z" fill="#f5cf2e" stroke="#c79a14" stroke-width=".6"/><ellipse cx="10.500" cy="6.600" rx="10.200" ry="3.500" transform="rotate(-7 10.500 6.600)" fill="url(#hb)" stroke="#2a6f9e" stroke-width=".8"/><path d="M5.300 6q-.3-5.600 4.500-5.800 4.700.1 4.500 5-4.500 2.600-9 .8z" fill="#62b8ea" stroke="#2f7fb5" stroke-width=".6"/><path d="M6.300 5.300q2 .8 4-.2" stroke="#c8ecff" stroke-width=".9" fill="none"/></svg>
<div class="t tr" style="left:110px;top:68px;max-width:104px;overflow:hidden">趋势策略翻倍开</div>
<div class="a hd" style="left:68px;top:100px;width:13px"></div>
<svg width="23" height="20" style="left:83px;top:90px" viewBox="0 0 23 20"><path d="M16.300 9.900l4.300 4.300-4.300 4.300-4.300-4.300z" fill="#f4d23a" stroke="#a88414" stroke-width=".9"/><path d="M4.600 9q.6 5.300 5.400 5.700 2 0 3.400-1.700l3.300-4.500z" fill="#f5cf2e" stroke="#c79a14" stroke-width=".6"/><ellipse cx="10.500" cy="6.600" rx="10.200" ry="3.500" transform="rotate(-7 10.500 6.600)" fill="url(#hb)" stroke="#2a6f9e" stroke-width=".8"/><path d="M5.300 6q-.3-5.600 4.500-5.800 4.700.1 4.500 5-4.500 2.600-9 .8z" fill="#62b8ea" stroke="#2f7fb5" stroke-width=".6"/><path d="M6.300 5.300q2 .8 4-.2" stroke="#c8ecff" stroke-width=".9" fill="none"/></svg>
<div class="t tr" style="left:110px;top:90px;max-width:104px;overflow:hidden">趋势王者<span class="l">Kings</span></div>
<div class="a hd" style="left:68px;top:122px;width:13px"></div>
<svg width="23" height="20" style="left:83px;top:112px" viewBox="0 0 23 20"><path d="M16.300 9.900l4.300 4.300-4.300 4.300-4.300-4.300z" fill="#f4d23a" stroke="#a88414" stroke-width=".9"/><path d="M4.600 9q.6 5.300 5.400 5.700 2 0 3.400-1.700l3.300-4.500z" fill="#f5cf2e" stroke="#c79a14" stroke-width=".6"/><ellipse cx="10.500" cy="6.600" rx="10.200" ry="3.500" transform="rotate(-7 10.500 6.600)" fill="url(#hb)" stroke="#2a6f9e" stroke-width=".8"/><path d="M5.300 6q-.3-5.600 4.500-5.800 4.700.1 4.500 5-4.500 2.600-9 .8z" fill="#62b8ea" stroke="#2f7fb5" stroke-width=".6"/><path d="M6.300 5.300q2 .8 4-.2" stroke="#c8ecff" stroke-width=".9" fill="none"/></svg>
<div class="t tr" style="left:110px;top:112px;max-width:104px;overflow:hidden">新版<span class="l">ta</span>趋势无限</div>
<div class="a hd" style="left:68px;top:144px;width:13px"></div>
<svg width="23" height="20" style="left:83px;top:134px" viewBox="0 0 23 20"><path d="M16.300 9.900l4.300 4.300-4.300 4.300-4.300-4.300z" fill="#f4d23a" stroke="#a88414" stroke-width=".9"/><path d="M4.600 9q.6 5.300 5.400 5.700 2 0 3.400-1.700l3.300-4.500z" fill="#f5cf2e" stroke="#c79a14" stroke-width=".6"/><ellipse cx="10.500" cy="6.600" rx="10.200" ry="3.500" transform="rotate(-7 10.500 6.600)" fill="url(#hb)" stroke="#2a6f9e" stroke-width=".8"/><path d="M5.300 6q-.3-5.600 4.500-5.800 4.700.1 4.500 5-4.500 2.600-9 .8z" fill="#62b8ea" stroke="#2f7fb5" stroke-width=".6"/><path d="M6.300 5.300q2 .8 4-.2" stroke="#c8ecff" stroke-width=".9" fill="none"/></svg>
<div class="t tr" style="left:110px;top:134px;max-width:104px;overflow:hidden">星突破<span class="l">12</span>月<span class="l">7</span>号双</div>
<div class="a hd" style="left:47px;top:166px;width:9px"></div>
<svg width="23" height="20" style="left:57px;top:156px" viewBox="0 0 23 20"><path d="M16.300 9.900l4.300 4.300-4.300 4.300-4.300-4.300z" fill="#f4d23a" stroke="#a88414" stroke-width=".9"/><path d="M4.600 9q.6 5.300 5.400 5.700 2 0 3.400-1.700l3.300-4.500z" fill="#f5cf2e" stroke="#c79a14" stroke-width=".6"/><ellipse cx="10.500" cy="6.600" rx="10.200" ry="3.500" transform="rotate(-7 10.500 6.600)" fill="url(#hb)" stroke="#2a6f9e" stroke-width=".8"/><path d="M5.300 6q-.3-5.600 4.500-5.800 4.700.1 4.500 5-4.500 2.600-9 .8z" fill="#62b8ea" stroke="#2f7fb5" stroke-width=".6"/><path d="M6.300 5.300q2 .8 4-.2" stroke="#c8ecff" stroke-width=".9" fill="none"/></svg>
<div class="a" style="left:36px;top:161px;width:11px;height:11px;border:1px solid #9aa0ac;background:linear-gradient(135deg,#fff,#e4e6ea)"></div>
<div class="a" style="left:38px;top:166px;width:7px;height:1px;background:#2a3a7a"></div>
<div class="a" style="left:41px;top:163px;width:1px;height:7px;background:#2a3a7a"></div>
<div class="t tr" style="left:84px;top:156px;max-width:130px;overflow:hidden"><span class="l">jk503</span></div>
<div class="a hd" style="left:47px;top:188px;width:9px"></div>
<svg width="23" height="20" style="left:57px;top:178px" viewBox="0 0 23 20"><path d="M16.300 9.900l4.300 4.300-4.300 4.300-4.300-4.300z" fill="#f4d23a" stroke="#a88414" stroke-width=".9"/><path d="M4.600 9q.6 5.300 5.400 5.700 2 0 3.400-1.700l3.300-4.500z" fill="#f5cf2e" stroke="#c79a14" stroke-width=".6"/><ellipse cx="10.500" cy="6.600" rx="10.200" ry="3.500" transform="rotate(-7 10.500 6.600)" fill="url(#hb)" stroke="#2a6f9e" stroke-width=".8"/><path d="M5.300 6q-.3-5.600 4.500-5.800 4.700.1 4.500 5-4.500 2.600-9 .8z" fill="#62b8ea" stroke="#2f7fb5" stroke-width=".6"/><path d="M6.300 5.300q2 .8 4-.2" stroke="#c8ecff" stroke-width=".9" fill="none"/></svg>
<div class="a" style="left:36px;top:183px;width:11px;height:11px;border:1px solid #9aa0ac;background:linear-gradient(135deg,#fff,#e4e6ea)"></div>
<div class="a" style="left:38px;top:188px;width:7px;height:1px;background:#2a3a7a"></div>
<div class="a" style="left:41px;top:185px;width:1px;height:7px;background:#2a3a7a"></div>
<div class="t tr" style="left:84px;top:178px;max-width:130px;overflow:hidden"><span class="l">LARRY</span></div>
<div class="a hd" style="left:47px;top:210px;width:9px"></div>
<svg width="23" height="20" style="left:57px;top:200px" viewBox="0 0 23 20"><path d="M16.300 9.900l4.300 4.300-4.300 4.300-4.300-4.300z" fill="#f4d23a" stroke="#a88414" stroke-width=".9"/><path d="M4.600 9q.6 5.300 5.400 5.700 2 0 3.400-1.700l3.300-4.500z" fill="#f5cf2e" stroke="#c79a14" stroke-width=".6"/><ellipse cx="10.500" cy="6.600" rx="10.200" ry="3.500" transform="rotate(-7 10.500 6.600)" fill="url(#hb)" stroke="#2a6f9e" stroke-width=".8"/><path d="M5.300 6q-.3-5.600 4.500-5.800 4.700.1 4.500 5-4.500 2.600-9 .8z" fill="#62b8ea" stroke="#2f7fb5" stroke-width=".6"/><path d="M6.300 5.300q2 .8 4-.2" stroke="#c8ecff" stroke-width=".9" fill="none"/></svg>
<div class="a" style="left:36px;top:205px;width:11px;height:11px;border:1px solid #9aa0ac;background:linear-gradient(135deg,#fff,#e4e6ea)"></div>
<div class="a" style="left:38px;top:210px;width:7px;height:1px;background:#2a3a7a"></div>
<div class="a" style="left:41px;top:207px;width:1px;height:7px;background:#2a3a7a"></div>
<div class="t tr" style="left:84px;top:200px;max-width:130px;overflow:hidden"><span class="l">LENA Scalp MT4</span></div>
<div class="a hd" style="left:47px;top:232px;width:9px"></div>
<svg width="23" height="20" style="left:57px;top:222px" viewBox="0 0 23 20"><path d="M16.300 9.900l4.300 4.300-4.300 4.300-4.300-4.300z" fill="#f4d23a" stroke="#a88414" stroke-width=".9"/><path d="M4.600 9q.6 5.300 5.400 5.700 2 0 3.400-1.700l3.300-4.500z" fill="#f5cf2e" stroke="#c79a14" stroke-width=".6"/><ellipse cx="10.500" cy="6.600" rx="10.200" ry="3.500" transform="rotate(-7 10.500 6.600)" fill="url(#hb)" stroke="#2a6f9e" stroke-width=".8"/><path d="M5.300 6q-.3-5.600 4.500-5.800 4.700.1 4.500 5-4.500 2.600-9 .8z" fill="#62b8ea" stroke="#2f7fb5" stroke-width=".6"/><path d="M6.300 5.300q2 .8 4-.2" stroke="#c8ecff" stroke-width=".9" fill="none"/></svg>
<div class="a" style="left:36px;top:227px;width:11px;height:11px;border:1px solid #9aa0ac;background:linear-gradient(135deg,#fff,#e4e6ea)"></div>
<div class="a" style="left:38px;top:232px;width:7px;height:1px;background:#2a3a7a"></div>
<div class="a" style="left:41px;top:229px;width:1px;height:7px;background:#2a3a7a"></div>
<div class="t tr" style="left:84px;top:222px;max-width:130px;overflow:hidden"><span class="l">Quantum Empero</span></div>
<div class="a hd" style="left:47px;top:254px;width:9px"></div>
<svg width="23" height="20" style="left:57px;top:244px" viewBox="0 0 23 20"><path d="M16.300 9.900l4.300 4.300-4.300 4.300-4.300-4.300z" fill="#f4d23a" stroke="#a88414" stroke-width=".9"/><path d="M4.600 9q.6 5.300 5.400 5.700 2 0 3.400-1.700l3.300-4.500z" fill="#f5cf2e" stroke="#c79a14" stroke-width=".6"/><ellipse cx="10.500" cy="6.600" rx="10.200" ry="3.500" transform="rotate(-7 10.500 6.600)" fill="url(#hb)" stroke="#2a6f9e" stroke-width=".8"/><path d="M5.300 6q-.3-5.600 4.500-5.800 4.700.1 4.500 5-4.500 2.600-9 .8z" fill="#62b8ea" stroke="#2f7fb5" stroke-width=".6"/><path d="M6.300 5.300q2 .8 4-.2" stroke="#c8ecff" stroke-width=".9" fill="none"/></svg>
<div class="a" style="left:36px;top:249px;width:11px;height:11px;border:1px solid #9aa0ac;background:linear-gradient(135deg,#fff,#e4e6ea)"></div>
<div class="a" style="left:38px;top:254px;width:7px;height:1px;background:#2a3a7a"></div>
<div class="a" style="left:41px;top:251px;width:1px;height:7px;background:#2a3a7a"></div>
<div class="t tr" style="left:84px;top:244px;max-width:130px;overflow:hidden">悲伤的猪大肠</div>
<div class="a hd" style="left:47px;top:276px;width:9px"></div>
<svg width="23" height="20" style="left:57px;top:266px" viewBox="0 0 23 20"><path d="M16.300 9.900l4.300 4.300-4.300 4.300-4.300-4.300z" fill="#f4d23a" stroke="#a88414" stroke-width=".9"/><path d="M4.600 9q.6 5.300 5.400 5.700 2 0 3.400-1.700l3.300-4.500z" fill="#f5cf2e" stroke="#c79a14" stroke-width=".6"/><ellipse cx="10.500" cy="6.600" rx="10.200" ry="3.500" transform="rotate(-7 10.500 6.600)" fill="url(#hb)" stroke="#2a6f9e" stroke-width=".8"/><path d="M5.300 6q-.3-5.600 4.500-5.800 4.700.1 4.500 5-4.500 2.600-9 .8z" fill="#62b8ea" stroke="#2f7fb5" stroke-width=".6"/><path d="M6.300 5.300q2 .8 4-.2" stroke="#c8ecff" stroke-width=".9" fill="none"/></svg>
<div class="a" style="left:36px;top:271px;width:11px;height:11px;border:1px solid #9aa0ac;background:linear-gradient(135deg,#fff,#e4e6ea)"></div>
<div class="a" style="left:38px;top:276px;width:7px;height:1px;background:#2a3a7a"></div>
<div class="t tr" style="left:84px;top:266px;max-width:130px;overflow:hidden">财神<span class="l">ea2</span>位小数<span class="l">(</span>一次</div>
<div class="a hd" style="left:68px;top:298px;width:13px"></div>
<svg width="23" height="20" style="left:83px;top:288px" viewBox="0 0 23 20"><path d="M16.300 9.900l4.300 4.300-4.300 4.300-4.300-4.300z" fill="#a4a4a4" stroke="#666" stroke-width=".9"/><path d="M4.600 9q.6 5.300 5.400 5.700 2 0 3.400-1.700l3.300-4.500z" fill="#f5cf2e" stroke="#c79a14" stroke-width=".6"/><ellipse cx="10.500" cy="6.600" rx="10.200" ry="3.500" transform="rotate(-7 10.500 6.600)" fill="url(#hb)" stroke="#2a6f9e" stroke-width=".8"/><path d="M5.300 6q-.3-5.600 4.500-5.800 4.700.1 4.500 5-4.500 2.600-9 .8z" fill="#62b8ea" stroke="#2f7fb5" stroke-width=".6"/><path d="M6.300 5.300q2 .8 4-.2" stroke="#c8ecff" stroke-width=".9" fill="none"/></svg>
<div class="t tr" style="left:110px;top:288px;max-width:104px;overflow:hidden">黄金一次一单<span class="l">0-</span></div>
<div class="a hd" style="left:68px;top:320px;width:13px"></div>
<svg width="23" height="20" style="left:83px;top:310px" viewBox="0 0 23 20"><path d="M16.300 9.900l4.300 4.300-4.300 4.300-4.300-4.300z" fill="#f4d23a" stroke="#a88414" stroke-width=".9"/><path d="M4.600 9q.6 5.300 5.400 5.700 2 0 3.400-1.700l3.300-4.500z" fill="#f5cf2e" stroke="#c79a14" stroke-width=".6"/><ellipse cx="10.500" cy="6.600" rx="10.200" ry="3.500" transform="rotate(-7 10.500 6.600)" fill="url(#hb)" stroke="#2a6f9e" stroke-width=".8"/><path d="M5.300 6q-.3-5.600 4.500-5.800 4.700.1 4.500 5-4.500 2.600-9 .8z" fill="#62b8ea" stroke="#2f7fb5" stroke-width=".6"/><path d="M6.300 5.300q2 .8 4-.2" stroke="#c8ecff" stroke-width=".9" fill="none"/></svg>
<div class="t tr" style="left:110px;top:310px;max-width:104px;overflow:hidden">源码源码黄金一</div>
<div class="a hd" style="left:47px;top:342px;width:9px"></div>
<svg width="23" height="20" style="left:57px;top:332px" viewBox="0 0 23 20"><path d="M16.300 9.900l4.300 4.300-4.300 4.300-4.300-4.300z" fill="#f4d23a" stroke="#a88414" stroke-width=".9"/><path d="M4.600 9q.6 5.300 5.400 5.700 2 0 3.400-1.700l3.300-4.500z" fill="#f5cf2e" stroke="#c79a14" stroke-width=".6"/><ellipse cx="10.500" cy="6.600" rx="10.200" ry="3.500" transform="rotate(-7 10.500 6.600)" fill="url(#hb)" stroke="#2a6f9e" stroke-width=".8"/><path d="M5.300 6q-.3-5.600 4.500-5.800 4.700.1 4.500 5-4.500 2.600-9 .8z" fill="#62b8ea" stroke="#2f7fb5" stroke-width=".6"/><path d="M6.300 5.300q2 .8 4-.2" stroke="#c8ecff" stroke-width=".9" fill="none"/></svg>
<div class="a" style="left:36px;top:337px;width:11px;height:11px;border:1px solid #9aa0ac;background:linear-gradient(135deg,#fff,#e4e6ea)"></div>
<div class="a" style="left:38px;top:342px;width:7px;height:1px;background:#2a3a7a"></div>
<div class="a" style="left:41px;top:339px;width:1px;height:7px;background:#2a3a7a"></div>
<div class="t tr" style="left:84px;top:332px;max-width:130px;overflow:hidden">飞翼顺势外盘版<span class="l"> V2</span></div>
<div class="a hd" style="left:47px;top:364px;width:9px"></div>
<svg width="23" height="20" style="left:57px;top:354px" viewBox="0 0 23 20"><path d="M16.300 9.900l4.300 4.300-4.300 4.300-4.300-4.300z" fill="#f4d23a" stroke="#a88414" stroke-width=".9"/><path d="M4.600 9q.6 5.300 5.400 5.700 2 0 3.400-1.700l3.300-4.500z" fill="#f5cf2e" stroke="#c79a14" stroke-width=".6"/><ellipse cx="10.500" cy="6.600" rx="10.200" ry="3.500" transform="rotate(-7 10.500 6.600)" fill="url(#hb)" stroke="#2a6f9e" stroke-width=".8"/><path d="M5.300 6q-.3-5.600 4.500-5.800 4.700.1 4.500 5-4.500 2.600-9 .8z" fill="#62b8ea" stroke="#2f7fb5" stroke-width=".6"/><path d="M6.300 5.300q2 .8 4-.2" stroke="#c8ecff" stroke-width=".9" fill="none"/></svg>
<div class="a" style="left:36px;top:359px;width:11px;height:11px;border:1px solid #9aa0ac;background:linear-gradient(135deg,#fff,#e4e6ea)"></div>
<div class="a" style="left:38px;top:364px;width:7px;height:1px;background:#2a3a7a"></div>
<div class="a" style="left:41px;top:361px;width:1px;height:7px;background:#2a3a7a"></div>
<div class="t tr" style="left:84px;top:354px;max-width:130px;overflow:hidden">黄金顺势加仓</div>
<div class="a hd" style="left:47px;top:386px;width:9px"></div>
<svg width="23" height="20" style="left:57px;top:376px" viewBox="0 0 23 20"><path d="M16.300 9.900l4.300 4.300-4.300 4.300-4.300-4.300z" fill="#f4d23a" stroke="#a88414" stroke-width=".9"/><path d="M4.600 9q.6 5.300 5.400 5.700 2 0 3.400-1.700l3.300-4.500z" fill="#f5cf2e" stroke="#c79a14" stroke-width=".6"/><ellipse cx="10.500" cy="6.600" rx="10.200" ry="3.500" transform="rotate(-7 10.500 6.600)" fill="url(#hb)" stroke="#2a6f9e" stroke-width=".8"/><path d="M5.300 6q-.3-5.600 4.500-5.800 4.700.1 4.500 5-4.500 2.600-9 .8z" fill="#62b8ea" stroke="#2f7fb5" stroke-width=".6"/><path d="M6.300 5.300q2 .8 4-.2" stroke="#c8ecff" stroke-width=".9" fill="none"/></svg>
<div class="a" style="left:36px;top:381px;width:11px;height:11px;border:1px solid #9aa0ac;background:linear-gradient(135deg,#fff,#e4e6ea)"></div>
<div class="a" style="left:38px;top:386px;width:7px;height:1px;background:#2a3a7a"></div>
<div class="a" style="left:41px;top:383px;width:1px;height:7px;background:#2a3a7a"></div>
<div class="t tr" style="left:84px;top:376px;max-width:130px;overflow:hidden">金破<span class="l">1</span>号</div>
<div class="a hd" style="left:47px;top:408px;width:9px"></div>
<svg width="23" height="20" style="left:57px;top:398px" viewBox="0 0 23 20"><path d="M16.300 9.900l4.300 4.300-4.300 4.300-4.300-4.300z" fill="#f4d23a" stroke="#a88414" stroke-width=".9"/><path d="M4.600 9q.6 5.300 5.400 5.700 2 0 3.400-1.700l3.300-4.500z" fill="#f5cf2e" stroke="#c79a14" stroke-width=".6"/><ellipse cx="10.500" cy="6.600" rx="10.200" ry="3.500" transform="rotate(-7 10.500 6.600)" fill="url(#hb)" stroke="#2a6f9e" stroke-width=".8"/><path d="M5.300 6q-.3-5.600 4.500-5.800 4.700.1 4.500 5-4.500 2.600-9 .8z" fill="#62b8ea" stroke="#2f7fb5" stroke-width=".6"/><path d="M6.300 5.300q2 .8 4-.2" stroke="#c8ecff" stroke-width=".9" fill="none"/></svg>
<div class="a" style="left:36px;top:403px;width:11px;height:11px;border:1px solid #9aa0ac;background:linear-gradient(135deg,#fff,#e4e6ea)"></div>
<div class="a" style="left:38px;top:408px;width:7px;height:1px;background:#2a3a7a"></div>
<div class="a" style="left:41px;top:405px;width:1px;height:7px;background:#2a3a7a"></div>
<div class="t tr" style="left:84px;top:398px;max-width:130px;overflow:hidden">市场付费待测</div>
<div class="a hd" style="left:47px;top:430px;width:9px"></div>
<svg width="23" height="20" style="left:57px;top:420px" viewBox="0 0 23 20"><path d="M16.300 9.900l4.300 4.300-4.300 4.300-4.300-4.300z" fill="#f4d23a" stroke="#a88414" stroke-width=".9"/><path d="M4.600 9q.6 5.300 5.400 5.700 2 0 3.400-1.700l3.300-4.500z" fill="#f5cf2e" stroke="#c79a14" stroke-width=".6"/><ellipse cx="10.500" cy="6.600" rx="10.200" ry="3.500" transform="rotate(-7 10.500 6.600)" fill="url(#hb)" stroke="#2a6f9e" stroke-width=".8"/><path d="M5.300 6q-.3-5.600 4.500-5.800 4.700.1 4.500 5-4.500 2.600-9 .8z" fill="#62b8ea" stroke="#2f7fb5" stroke-width=".6"/><path d="M6.300 5.300q2 .8 4-.2" stroke="#c8ecff" stroke-width=".9" fill="none"/></svg>
<div class="a" style="left:36px;top:425px;width:11px;height:11px;border:1px solid #9aa0ac;background:linear-gradient(135deg,#fff,#e4e6ea)"></div>
<div class="a" style="left:38px;top:430px;width:7px;height:1px;background:#2a3a7a"></div>
<div class="a" style="left:41px;top:427px;width:1px;height:7px;background:#2a3a7a"></div>
<div class="t tr" style="left:84px;top:420px;max-width:130px;overflow:hidden">新趋势</div>
<div class="a hd" style="left:47px;top:452px;width:9px"></div>
<svg width="23" height="20" style="left:57px;top:442px" viewBox="0 0 23 20"><path d="M16.300 9.900l4.300 4.300-4.300 4.300-4.300-4.300z" fill="#f4d23a" stroke="#a88414" stroke-width=".9"/><path d="M4.600 9q.6 5.300 5.400 5.700 2 0 3.400-1.700l3.300-4.500z" fill="#f5cf2e" stroke="#c79a14" stroke-width=".6"/><ellipse cx="10.500" cy="6.600" rx="10.200" ry="3.500" transform="rotate(-7 10.500 6.600)" fill="url(#hb)" stroke="#2a6f9e" stroke-width=".8"/><path d="M5.300 6q-.3-5.600 4.500-5.800 4.700.1 4.500 5-4.500 2.600-9 .8z" fill="#62b8ea" stroke="#2f7fb5" stroke-width=".6"/><path d="M6.300 5.300q2 .8 4-.2" stroke="#c8ecff" stroke-width=".9" fill="none"/></svg>
<div class="a" style="left:36px;top:447px;width:11px;height:11px;border:1px solid #9aa0ac;background:linear-gradient(135deg,#fff,#e4e6ea)"></div>
<div class="a" style="left:38px;top:452px;width:7px;height:1px;background:#2a3a7a"></div>
<div class="a" style="left:41px;top:449px;width:1px;height:7px;background:#2a3a7a"></div>
<div class="t tr" style="left:84px;top:442px;max-width:130px;overflow:hidden">星突破</div>
<div class="a hd" style="left:47px;top:474px;width:9px"></div>
<svg width="23" height="20" style="left:57px;top:464px" viewBox="0 0 23 20"><path d="M16.300 9.900l4.300 4.300-4.300 4.300-4.300-4.300z" fill="#f4d23a" stroke="#a88414" stroke-width=".9"/><path d="M4.600 9q.6 5.300 5.400 5.700 2 0 3.400-1.700l3.300-4.500z" fill="#f5cf2e" stroke="#c79a14" stroke-width=".6"/><ellipse cx="10.500" cy="6.600" rx="10.200" ry="3.500" transform="rotate(-7 10.500 6.600)" fill="url(#hb)" stroke="#2a6f9e" stroke-width=".8"/><path d="M5.300 6q-.3-5.600 4.500-5.800 4.700.1 4.500 5-4.500 2.600-9 .8z" fill="#62b8ea" stroke="#2f7fb5" stroke-width=".6"/><path d="M6.300 5.300q2 .8 4-.2" stroke="#c8ecff" stroke-width=".9" fill="none"/></svg>
<div class="a" style="left:36px;top:469px;width:11px;height:11px;border:1px solid #9aa0ac;background:linear-gradient(135deg,#fff,#e4e6ea)"></div>
<div class="a" style="left:38px;top:474px;width:7px;height:1px;background:#2a3a7a"></div>
<div class="a" style="left:41px;top:471px;width:1px;height:7px;background:#2a3a7a"></div>
<div class="t tr" style="left:84px;top:464px;max-width:130px;overflow:hidden">星突破<span class="l">mt4</span>最终版本</div>
<div class="a hd" style="left:42px;top:496px;width:14px"></div>
<svg width="23" height="20" style="left:57px;top:486px" viewBox="0 0 23 20"><path d="M16.300 9.900l4.300 4.300-4.300 4.300-4.300-4.300z" fill="#a4a4a4" stroke="#666" stroke-width=".9"/><path d="M4.600 9q.6 5.300 5.400 5.700 2 0 3.400-1.700l3.300-4.500z" fill="#f5cf2e" stroke="#c79a14" stroke-width=".6"/><ellipse cx="10.500" cy="6.600" rx="10.200" ry="3.500" transform="rotate(-7 10.500 6.600)" fill="url(#hb)" stroke="#2a6f9e" stroke-width=".8"/><path d="M5.300 6q-.3-5.600 4.500-5.800 4.700.1 4.500 5-4.500 2.600-9 .8z" fill="#62b8ea" stroke="#2f7fb5" stroke-width=".6"/><path d="M6.300 5.300q2 .8 4-.2" stroke="#c8ecff" stroke-width=".9" fill="none"/></svg>
<div class="t tr" style="left:84px;top:486px;max-width:130px;overflow:hidden"><span class="l">131313</span></div>
<div class="a hd" style="left:42px;top:518px;width:14px"></div>
<svg width="23" height="20" style="left:57px;top:508px" viewBox="0 0 23 20"><path d="M16.300 9.900l4.300 4.300-4.300 4.300-4.300-4.300z" fill="#f4d23a" stroke="#a88414" stroke-width=".9"/><path d="M4.600 9q.6 5.300 5.400 5.700 2 0 3.400-1.700l3.300-4.500z" fill="#f5cf2e" stroke="#c79a14" stroke-width=".6"/><ellipse cx="10.500" cy="6.600" rx="10.200" ry="3.500" transform="rotate(-7 10.500 6.600)" fill="url(#hb)" stroke="#2a6f9e" stroke-width=".8"/><path d="M5.300 6q-.3-5.600 4.500-5.800 4.700.1 4.500 5-4.500 2.600-9 .8z" fill="#62b8ea" stroke="#2f7fb5" stroke-width=".6"/><path d="M6.300 5.300q2 .8 4-.2" stroke="#c8ecff" stroke-width=".9" fill="none"/></svg>
<div class="t tr" style="left:84px;top:508px;max-width:130px;overflow:hidden"><span class="l">1fx-44ea.com</span></div>
<div class="a hd" style="left:42px;top:540px;width:14px"></div>
<svg width="23" height="20" style="left:57px;top:530px" viewBox="0 0 23 20"><path d="M16.300 9.900l4.300 4.300-4.300 4.300-4.300-4.300z" fill="#f4d23a" stroke="#a88414" stroke-width=".9"/><path d="M4.600 9q.6 5.300 5.400 5.700 2 0 3.400-1.700l3.300-4.500z" fill="#f5cf2e" stroke="#c79a14" stroke-width=".6"/><ellipse cx="10.500" cy="6.600" rx="10.200" ry="3.500" transform="rotate(-7 10.500 6.600)" fill="url(#hb)" stroke="#2a6f9e" stroke-width=".8"/><path d="M5.300 6q-.3-5.600 4.500-5.800 4.700.1 4.500 5-4.500 2.600-9 .8z" fill="#62b8ea" stroke="#2f7fb5" stroke-width=".6"/><path d="M6.300 5.300q2 .8 4-.2" stroke="#c8ecff" stroke-width=".9" fill="none"/></svg>
<div class="t tr" style="left:84px;top:530px;max-width:130px;overflow:hidden"><span class="l">2019</span>年冠军<span class="l">EA</span></div>
<div class="a hd" style="left:42px;top:562px;width:14px"></div>
<svg width="23" height="20" style="left:57px;top:552px" viewBox="0 0 23 20"><path d="M16.300 9.900l4.300 4.300-4.300 4.300-4.300-4.300z" fill="#a4a4a4" stroke="#666" stroke-width=".9"/><path d="M4.600 9q.6 5.300 5.400 5.700 2 0 3.400-1.700l3.300-4.500z" fill="#f5cf2e" stroke="#c79a14" stroke-width=".6"/><ellipse cx="10.500" cy="6.600" rx="10.200" ry="3.500" transform="rotate(-7 10.500 6.600)" fill="url(#hb)" stroke="#2a6f9e" stroke-width=".8"/><path d="M5.300 6q-.3-5.600 4.500-5.800 4.700.1 4.500 5-4.500 2.600-9 .8z" fill="#62b8ea" stroke="#2f7fb5" stroke-width=".6"/><path d="M6.300 5.300q2 .8 4-.2" stroke="#c8ecff" stroke-width=".9" fill="none"/></svg>
<div class="t tr" style="left:84px;top:552px;max-width:130px;overflow:hidden"><span class="l">2</span>策略专业</div>
<div class="a hd" style="left:42px;top:584px;width:14px"></div>
<svg width="23" height="20" style="left:57px;top:574px" viewBox="0 0 23 20"><path d="M16.300 9.900l4.300 4.300-4.300 4.300-4.300-4.300z" fill="#a4a4a4" stroke="#666" stroke-width=".9"/><path d="M4.600 9q.6 5.300 5.400 5.700 2 0 3.400-1.700l3.300-4.500z" fill="#f5cf2e" stroke="#c79a14" stroke-width=".6"/><ellipse cx="10.500" cy="6.600" rx="10.200" ry="3.500" transform="rotate(-7 10.500 6.600)" fill="url(#hb)" stroke="#2a6f9e" stroke-width=".8"/><path d="M5.300 6q-.3-5.600 4.500-5.800 4.700.1 4.500 5-4.500 2.600-9 .8z" fill="#62b8ea" stroke="#2f7fb5" stroke-width=".6"/><path d="M6.300 5.300q2 .8 4-.2" stroke="#c8ecff" stroke-width=".9" fill="none"/></svg>
<div class="t tr" style="left:84px;top:574px;max-width:130px;overflow:hidden"><span class="l">33</span>中文突破<span class="l">(1)(1)</span></div>
<div class="a hd" style="left:42px;top:606px;width:14px"></div>
<svg width="23" height="20" style="left:57px;top:596px" viewBox="0 0 23 20"><path d="M16.300 9.900l4.300 4.300-4.300 4.300-4.300-4.300z" fill="#a4a4a4" stroke="#666" stroke-width=".9"/><path d="M4.600 9q.6 5.300 5.400 5.700 2 0 3.400-1.700l3.300-4.500z" fill="#f5cf2e" stroke="#c79a14" stroke-width=".6"/><ellipse cx="10.500" cy="6.600" rx="10.200" ry="3.500" transform="rotate(-7 10.500 6.600)" fill="url(#hb)" stroke="#2a6f9e" stroke-width=".8"/><path d="M5.300 6q-.3-5.600 4.500-5.800 4.700.1 4.500 5-4.500 2.600-9 .8z" fill="#62b8ea" stroke="#2f7fb5" stroke-width=".6"/><path d="M6.300 5.300q2 .8 4-.2" stroke="#c8ecff" stroke-width=".9" fill="none"/></svg>
<div class="t tr" style="left:84px;top:596px;max-width:130px;overflow:hidden"><span class="l">7050380</span></div>
<div class="a hd" style="left:42px;top:628px;width:14px"></div>
<svg width="23" height="20" style="left:57px;top:618px" viewBox="0 0 23 20"><path d="M16.300 9.900l4.300 4.300-4.300 4.300-4.300-4.300z" fill="#a4a4a4" stroke="#666" stroke-width=".9"/><path d="M4.600 9q.6 5.300 5.400 5.700 2 0 3.400-1.700l3.300-4.500z" fill="#f5cf2e" stroke="#c79a14" stroke-width=".6"/><ellipse cx="10.500" cy="6.600" rx="10.200" ry="3.500" transform="rotate(-7 10.500 6.600)" fill="url(#hb)" stroke="#2a6f9e" stroke-width=".8"/><path d="M5.300 6q-.3-5.600 4.500-5.800 4.700.1 4.500 5-4.500 2.600-9 .8z" fill="#62b8ea" stroke="#2f7fb5" stroke-width=".6"/><path d="M6.300 5.300q2 .8 4-.2" stroke="#c8ecff" stroke-width=".9" fill="none"/></svg>
<div class="t tr" style="left:84px;top:618px;max-width:130px;overflow:hidden"><span class="l">[EAHub]Accelerat</span></div>
<div class="a hd" style="left:42px;top:650px;width:14px"></div>
<svg width="23" height="20" style="left:57px;top:640px" viewBox="0 0 23 20"><path d="M16.300 9.900l4.300 4.300-4.300 4.300-4.300-4.300z" fill="#a4a4a4" stroke="#666" stroke-width=".9"/><path d="M4.600 9q.6 5.300 5.400 5.700 2 0 3.400-1.700l3.300-4.500z" fill="#f5cf2e" stroke="#c79a14" stroke-width=".6"/><ellipse cx="10.500" cy="6.600" rx="10.200" ry="3.500" transform="rotate(-7 10.500 6.600)" fill="url(#hb)" stroke="#2a6f9e" stroke-width=".8"/><path d="M5.300 6q-.3-5.600 4.500-5.800 4.700.1 4.500 5-4.500 2.600-9 .8z" fill="#62b8ea" stroke="#2f7fb5" stroke-width=".6"/><path d="M6.300 5.300q2 .8 4-.2" stroke="#c8ecff" stroke-width=".9" fill="none"/></svg>
<div class="t tr" style="left:84px;top:640px;max-width:130px;overflow:hidden"><span class="l">[EAHub]Boring Pip</span></div>
</div>
<div class="a" style="left:5px;top:683px;width:55px;height:24px;background:#fff;border:1px solid #111;border-top:none"></div>
<div class="t" style="left:18px;top:685px;font-size:15px">常用</div>
<div class="t" style="left:73px;top:685px;font-size:15px;color:#7a7a7a">收藏夹</div>
<div class="a" style="left:130px;top:686px;width:1px;height:19px;background:#555"></div>
</div>
<div class="a" id="chart" style="left:400px;top:97px;width:1446px;height:688px;background:#000;overflow:hidden">
<div class="a" style="left:2px;top:2px;width:1392px;height:1px;background:#fff"></div>
<div class="a" style="left:2px;top:2px;width:1px;height:663px;background:#fff"></div>
<svg width="1446" height="690" style="left:0;top:0" viewBox="400 97 1446 690" shape-rendering="crispEdges">
<path d="M404 105.5H1793" stroke="#778899" stroke-width="1" stroke-dasharray="3 3"/>
<path d="M404 154.5H1793" stroke="#778899" stroke-width="1" stroke-dasharray="3 3"/>
<path d="M404 203.5H1793" stroke="#778899" stroke-width="1" stroke-dasharray="3 3"/>
<path d="M404 252.5H1793" stroke="#778899" stroke-width="1" stroke-dasharray="3 3"/>
<path d="M404 301.5H1793" stroke="#778899" stroke-width="1" stroke-dasharray="3 3"/>
<path d="M404 350.5H1793" stroke="#778899" stroke-width="1" stroke-dasharray="3 3"/>
<path d="M404 399.5H1793" stroke="#778899" stroke-width="1" stroke-dasharray="3 3"/>
<path d="M404 448.5H1793" stroke="#778899" stroke-width="1" stroke-dasharray="3 3"/>
<path d="M404 497.5H1793" stroke="#778899" stroke-width="1" stroke-dasharray="3 3"/>
<path d="M404 546.5H1793" stroke="#778899" stroke-width="1" stroke-dasharray="3 3"/>
<path d="M404 595.5H1793" stroke="#778899" stroke-width="1" stroke-dasharray="3 3"/>
<path d="M404 693.5H1793" stroke="#778899" stroke-width="1" stroke-dasharray="3 3"/>
<path d="M404 742.5H1793" stroke="#778899" stroke-width="1" stroke-dasharray="3 3"/>
<path d="M451.5 100V761" stroke="#778899" stroke-width="1" stroke-dasharray="3 3"/>
<path d="M499.5 100V761" stroke="#778899" stroke-width="1" stroke-dasharray="3 3"/>
<path d="M547.5 100V761" stroke="#778899" stroke-width="1" stroke-dasharray="3 3"/>
<path d="M595.5 100V761" stroke="#778899" stroke-width="1" stroke-dasharray="3 3"/>
<path d="M643.5 100V761" stroke="#778899" stroke-width="1" stroke-dasharray="3 3"/>
<path d="M691.5 100V761" stroke="#778899" stroke-width="1" stroke-dasharray="3 3"/>
<path d="M739.5 100V761" stroke="#778899" stroke-width="1" stroke-dasharray="3 3"/>
<path d="M787.5 100V761" stroke="#778899" stroke-width="1" stroke-dasharray="3 3"/>
<path d="M835.5 100V761" stroke="#778899" stroke-width="1" stroke-dasharray="3 3"/>
<path d="M883.5 100V761" stroke="#778899" stroke-width="1" stroke-dasharray="3 3"/>
<path d="M931.5 100V761" stroke="#778899" stroke-width="1" stroke-dasharray="3 3"/>
<path d="M979.5 100V761" stroke="#778899" stroke-width="1" stroke-dasharray="3 3"/>
<path d="M1027.5 100V761" stroke="#778899" stroke-width="1" stroke-dasharray="3 3"/>
<path d="M1075.5 100V761" stroke="#778899" stroke-width="1" stroke-dasharray="3 3"/>
<path d="M1123.5 100V761" stroke="#778899" stroke-width="1" stroke-dasharray="3 3"/>
<path d="M1171.5 100V761" stroke="#778899" stroke-width="1" stroke-dasharray="3 3"/>
<path d="M1219.5 100V761" stroke="#778899" stroke-width="1" stroke-dasharray="3 3"/>
<path d="M1267.5 100V761" stroke="#778899" stroke-width="1" stroke-dasharray="3 3"/>
<path d="M1315.5 100V761" stroke="#778899" stroke-width="1" stroke-dasharray="3 3"/>
<path d="M1363.5 100V761" stroke="#778899" stroke-width="1" stroke-dasharray="3 3"/>
<path d="M1411.5 100V761" stroke="#778899" stroke-width="1" stroke-dasharray="3 3"/>
<path d="M1459.5 100V761" stroke="#778899" stroke-width="1" stroke-dasharray="3 3"/>
<path d="M1507.5 100V761" stroke="#778899" stroke-width="1" stroke-dasharray="3 3"/>
<path d="M1555.5 100V761" stroke="#778899" stroke-width="1" stroke-dasharray="3 3"/>
<path d="M1603.5 100V761" stroke="#778899" stroke-width="1" stroke-dasharray="3 3"/>
<path d="M1651.5 100V761" stroke="#778899" stroke-width="1" stroke-dasharray="3 3"/>
<path d="M1699.5 100V761" stroke="#778899" stroke-width="1" stroke-dasharray="3 3"/>
<path d="M1747.5 100V761" stroke="#778899" stroke-width="1" stroke-dasharray="3 3"/>
<path d="M404 644.500H1793" stroke="#8a96a8" stroke-width="1"/>
<path d="M1793.500 99V762M403 761.500H1794" stroke="#fff" stroke-width="1"/>
<path d="M1793 105.5h3" stroke="#fff"/>
<path d="M1793 154.5h3" stroke="#fff"/>
<path d="M1793 203.5h3" stroke="#fff"/>
<path d="M1793 252.5h3" stroke="#fff"/>
<path d="M1793 301.5h3" stroke="#fff"/>
<path d="M1793 350.5h3" stroke="#fff"/>
<path d="M1793 399.5h3" stroke="#fff"/>
<path d="M1793 448.5h3" stroke="#fff"/>
<path d="M1793 497.5h3" stroke="#fff"/>
<path d="M1793 546.5h3" stroke="#fff"/>
<path d="M1793 595.5h3" stroke="#fff"/>
<path d="M1793 693.5h3" stroke="#fff"/>
<path d="M1793 742.5h3" stroke="#fff"/>
<path d="M1793 644.5h3" stroke="#fff"/>
<path d="M403.5 761v4" stroke="#fff"/>
<path d="M499.5 761v4" stroke="#fff"/>
<path d="M595.5 761v4" stroke="#fff"/>
<path d="M691.5 761v4" stroke="#fff"/>
<path d="M787.5 761v4" stroke="#fff"/>
<path d="M883.5 761v4" stroke="#fff"/>
<path d="M979.5 761v4" stroke="#fff"/>
<path d="M1075.5 761v4" stroke="#fff"/>
<path d="M1171.5 761v4" stroke="#fff"/>
<path d="M1267.5 761v4" stroke="#fff"/>
<path d="M1363.5 761v4" stroke="#fff"/>
<path d="M1459.5 761v4" stroke="#fff"/>
<path d="M1555.5 761v4" stroke="#fff"/>
<path d="M1651.5 761v4" stroke="#fff"/>
<path d="M1747.5 761v4" stroke="#fff"/>
<path d="M403.5 715V726" stroke="#00ff00" stroke-width="1"/>
<path d="M405.5 710V721" stroke="#00ff00" stroke-width="1"/>
<path d="M407.5 694V716" stroke="#00ff00" stroke-width="1"/>
<path d="M409.5 690V701" stroke="#00ff00" stroke-width="1"/>
<path d="M411.5 681V693" stroke="#00ff00" stroke-width="1"/>
<path d="M413.5 690V706" stroke="#00ff00" stroke-width="1"/>
<path d="M415.5 638V714" stroke="#00ff00" stroke-width="1"/>
<path d="M417.5 626V650" stroke="#00ff00" stroke-width="1"/>
<path d="M419.5 630V655" stroke="#00ff00" stroke-width="1"/>
<path d="M421.5 634V663" stroke="#00ff00" stroke-width="1"/>
<path d="M423.5 638V670" stroke="#00ff00" stroke-width="1"/>
<path d="M425.5 660V694" stroke="#00ff00" stroke-width="1"/>
<path d="M427.5 642V693" stroke="#00ff00" stroke-width="1"/>
<path d="M429.5 664V693" stroke="#00ff00" stroke-width="1"/>
<path d="M431.5 645V678" stroke="#00ff00" stroke-width="1"/>
<path d="M433.5 654V677" stroke="#00ff00" stroke-width="1"/>
<path d="M435.5 647V675" stroke="#00ff00" stroke-width="1"/>
<path d="M437.5 671V692" stroke="#00ff00" stroke-width="1"/>
<path d="M439.5 687V712" stroke="#00ff00" stroke-width="1"/>
<path d="M441.5 699V714" stroke="#00ff00" stroke-width="1"/>
<path d="M443.5 690V705" stroke="#00ff00" stroke-width="1"/>
<path d="M445.5 685V710" stroke="#00ff00" stroke-width="1"/>
<path d="M447.5 690V699" stroke="#00ff00" stroke-width="1"/>
<path d="M449.5 690V703" stroke="#00ff00" stroke-width="1"/>
<path d="M451.5 672V695" stroke="#00ff00" stroke-width="1"/>
<path d="M453.5 675V690" stroke="#00ff00" stroke-width="1"/>
<path d="M455.5 685V704" stroke="#00ff00" stroke-width="1"/>
<path d="M457.5 693V703" stroke="#00ff00" stroke-width="1"/>
<path d="M459.5 693V701" stroke="#00ff00" stroke-width="1"/>
<path d="M461.5 690V700" stroke="#00ff00" stroke-width="1"/>
<path d="M463.5 682V708" stroke="#00ff00" stroke-width="1"/>
<path d="M465.5 683V699" stroke="#00ff00" stroke-width="1"/>
<path d="M467.5 696V736" stroke="#00ff00" stroke-width="1"/>
<path d="M469.5 727V743" stroke="#00ff00" stroke-width="1"/>
<path d="M471.5 718V746" stroke="#00ff00" stroke-width="1"/>
<path d="M473.5 712V743" stroke="#00ff00" stroke-width="1"/>
<path d="M475.5 688V731" stroke="#00ff00" stroke-width="1"/>
<path d="M477.5 672V718" stroke="#00ff00" stroke-width="1"/>
<path d="M479.5 669V716" stroke="#00ff00" stroke-width="1"/>
<path d="M481.5 693V716" stroke="#00ff00" stroke-width="1"/>
<path d="M483.5 696V726" stroke="#00ff00" stroke-width="1"/>
<path d="M485.5 709V727" stroke="#00ff00" stroke-width="1"/>
<path d="M487.5 706V734" stroke="#00ff00" stroke-width="1"/>
<path d="M489.5 712V731" stroke="#00ff00" stroke-width="1"/>
<path d="M491.5 704V716" stroke="#00ff00" stroke-width="1"/>
<path d="M493.5 705V719" stroke="#00ff00" stroke-width="1"/>
<path d="M495.5 706V724" stroke="#00ff00" stroke-width="1"/>
<path d="M497.5 705V725" stroke="#00ff00" stroke-width="1"/>
<path d="M499.5 705V715" stroke="#00ff00" stroke-width="1"/>
<path d="M501.5 699V718" stroke="#00ff00" stroke-width="1"/>
<path d="M503.5 703V713" stroke="#00ff00" stroke-width="1"/>
<path d="M505.5 697V708" stroke="#00ff00" stroke-width="1"/>
<path d="M507.5 705V715" stroke="#00ff00" stroke-width="1"/>
<path d="M509.5 707V719" stroke="#00ff00" stroke-width="1"/>
<path d="M511.5 697V716" stroke="#00ff00" stroke-width="1"/>
<path d="M513.5 703V734" stroke="#00ff00" stroke-width="1"/>
<path d="M515.5 697V725" stroke="#00ff00" stroke-width="1"/>
<path d="M517.5 697V716" stroke="#00ff00" stroke-width="1"/>
<path d="M519.5 697V745" stroke="#00ff00" stroke-width="1"/>
<path d="M521.5 697V726" stroke="#00ff00" stroke-width="1"/>
<path d="M523.5 697V739" stroke="#00ff00" stroke-width="1"/>
<path d="M525.5 697V718" stroke="#00ff00" stroke-width="1"/>
<path d="M1485.5 697v6" stroke="#00e000"/>
<path d="M1509.5 697v3" stroke="#00e000"/>
<path d="M1515.5 697v2" stroke="#00e000"/>
<path d="M1521.5 697v2" stroke="#00e000"/>
</svg>
<div class="t pl pr" style="left:1401px;top:1px">1.38885</div>
<div class="t pl pr" style="left:1401px;top:50px">1.38510</div>
<div class="t pl pr" style="left:1401px;top:99px">1.38140</div>
<div class="t pl pr" style="left:1401px;top:148px">1.37765</div>
<div class="t pl pr" style="left:1401px;top:197px">1.37390</div>
<div class="t pl pr" style="left:1401px;top:246px">1.37015</div>
<div class="t pl pr" style="left:1401px;top:295px">1.36645</div>
<div class="t pl pr" style="left:1401px;top:344px">1.36270</div>
<div class="t pl pr" style="left:1401px;top:393px">1.35895</div>
<div class="t pl pr" style="left:1401px;top:442px">1.35525</div>
<div class="t pl pr" style="left:1401px;top:491px">1.35150</div>
<div class="t pl pr" style="left:1401px;top:589px">1.34405</div>
<div class="t pl pr" style="left:1401px;top:638px">1.34030</div>
<div class="a" style="left:1395px;top:540px;width:52px;height:14px;background:#fff"></div>
<div class="t pl pr" style="left:1401px;top:539px;color:#000">1.34777</div>
<div class="t pl tm" style="left:2px;top:668px">20 Jan 2026</div>
<div class="t pl tm" style="left:98px;top:668px">22 Jan 03:00</div>
<div class="t pl tm" style="left:194px;top:668px">26 Jan 03:00</div>
<div class="t pl tm" style="left:290px;top:668px">28 Jan 03:00</div>
<div class="t pl tm" style="left:386px;top:668px">30 Jan 03:00</div>
<div class="t pl tm" style="left:482px;top:668px">3 Feb 03:00</div>
<div class="t pl tm" style="left:578px;top:668px">5 Feb 03:00</div>
<div class="t pl tm" style="left:674px;top:668px">9 Feb 03:00</div>
<div class="t pl tm" style="left:770px;top:668px">11 Feb 03:00</div>
<div class="t pl tm" style="left:866px;top:668px">13 Feb 03:00</div>
<div class="t pl tm" style="left:962px;top:668px">17 Feb 03:00</div>
<div class="t pl tm" style="left:1058px;top:668px">19 Feb 03:00</div>
<div class="t pl tm" style="left:1154px;top:668px">23 Feb 03:00</div>
<div class="t pl tm" style="left:1250px;top:668px">25 Feb 03:00</div>
<div class="t pl tm" style="left:1346px;top:668px">27 Feb 03:00</div>
<svg width="10" height="6" style="left:5px;top:9px" viewBox="0 0 10 6"><path d="M0 0h9l-4.500 5z" fill="#fff"/></svg>
<div class="t pl" style="left:21px;top:6px">GBPUSD.e,H1</div>
<div class="a" style="left:75px;top:3px;width:16px;height:10px;background:#2a3038;border:1px solid #4a5260"></div>
<div class="a" style="left:80px;top:7px;width:6px;height:1px;background:#ccd"></div>
<svg width="18" height="18" style="left:74px;top:28px" viewBox="0 0 18 18" fill="none" stroke="#9a9a9a" stroke-width="1.600"><path d="M9 1v16M1 9h16M9 1l-2.500 3M9 1l2.500 3M9 17l-2.500-3M9 17l2.500-3M1 9l3-2.500M1 9l3 2.500M17 9l-3-2.500M17 9l-3 2.500"/></svg>
<div class="a sb" style="left:75px;top:53px">?</div>
<div class="a sb" style="left:75px;top:78px">囲</div>
<div class="a sb" style="left:75px;top:101px">回</div>
<div class="a" style="left:95px;top:186px;transform:rotate(90deg);transform-origin:0 0;color:#f4f000;font-size:15.500px;line-height:16px;letter-spacing:.6px">V 6.16</div>
</div>
<div class="a" id="panel" style="left:498px;top:100px;width:1295px;height:597px;background:#242a32;overflow:hidden;border-left:1px solid #5a6370">
<div class="a" style="left:0;top:0;width:1295px;height:49px;background:#1c1c1c"></div>
<div class="t" style="left:4px;top:-1px;font-size:16.500px;color:#ffee00;line-height:20px;letter-spacing:.8px">MT4统计每一笔交易</div>
<div class="a" style="left:44px;top:28px;width:22px;height:20px;background:#2b313b;border-radius:3px"></div>
<div class="t" style="left:17px;top:28px;font-size:16px;color:#555a62;line-height:20px;letter-spacing:1px">综</div>
<div class="t" style="left:46px;top:28px;font-size:16px;color:#b8c0d0;line-height:20px;letter-spacing:1px">日</div>
<div class="t" style="left:72px;top:28px;font-size:16px;color:#555a62;line-height:20px;letter-spacing:1px">周</div>
<div class="t" style="left:100px;top:28px;font-size:16px;color:#555a62;line-height:20px;letter-spacing:1px">月</div>
<div class="t" style="left:127px;top:28px;font-size:16px;color:#555a62;line-height:20px;letter-spacing:1px">季</div>
<div class="t" style="left:155px;top:28px;font-size:16px;color:#555a62;line-height:20px;letter-spacing:1px">年</div>
<div class="t" style="left:182px;top:28px;font-size:16px;color:#555a62;line-height:20px;letter-spacing:1px">币</div>
<div class="t" style="left:211px;top:28px;font-size:16px;color:#555a62;line-height:20px;letter-spacing:1px">M</div>
<div class="t" style="left:237px;top:28px;font-size:16px;color:#555a62;line-height:20px;letter-spacing:1px">备</div>
<div class="t" style="left:268px;top:28px;font-size:16px;color:#555a62;line-height:20px;letter-spacing:1px">账户</div>
<div class="t" style="left:376px;top:28px;font-size:16px;color:#555a62;line-height:20px;letter-spacing:1px">轨迹</div>
<svg width="1295" height="597" style="left:0;top:0" viewBox="499 100 1295 597">
<path d="M511.500 166V262.500H1793" stroke="#6a6a6a" stroke-width="1" fill="none" shape-rendering="crispEdges"/>
<polyline points="511.5,260.5 582.6,247.0 651.7,256.2 689.6,257.3 727.5,257.3 795.2,244.3 867.0,264.0 938.8,233.4 990.0,214.9 1007.8,207.6 1156.6,185.4 1234.3,179.4 1283.2,177.2 1298.8,177.2 1356.5,182.3 1381.0,182.3 1416.7,181.0 1501.0,173.3 1543.0,172.2 1594.0,172.6 1631.0,174.4 1665.0,173.7 1701.0,172.6 1754.0,171.5 1793.0,171.0" fill="none" stroke="#00bfff" stroke-width="2"/>
</svg>
<div class="t" style="left:41px;top:166.5px;font-size:8.200px;color:#7a808a;line-height:10px;height:10px">2026.01.22</div>
<div class="a" style="left:0;top:580px;width:1295px;height:18px;background:#1c1c1c"></div>
<div class="a" style="left:0;top:596px;width:1295px;height:1px;background:#8a94a4"></div>
<div class="t th" style="left:5px;top:193px">日期</div>
<div class="t th" style="left:106px;top:193px">总手数</div>
<div class="t th" style="left:167px;top:193px">最小<span class="bar">|</span>大手数</div>
<div class="t th" style="left:256px;top:193px">次数</div>
<div class="t th" style="left:292px;top:193px">盈亏金额</div>
<div class="t th" style="left:392px;top:193px">百分比%</div>
<div class="t th" style="left:468px;top:193px">出入金</div>
<div class="t th" style="left:542px;top:193px">余额</div>
<div class="t th" style="left:642px;top:193px">最大浮亏金额</div>
<div class="t th" style="left:742px;top:193px">最大浮亏比例</div>
<div class="t th" style="left:842px;top:193px">最大浮盈金额</div>
<div class="t th" style="left:942px;top:193px">最大浮盈比例</div>
<div class="t th" style="left:1042px;top:193px">最小<span class="bar">|</span>平均<span class="bar">|</span>最大持仓时间</div>
<div class="t th" style="left:1281px;top:193px">胜</div>
<div class="t td" style="left:5px;top:212.25px;color:#c4cce0">2026.02.27</div>
<div class="t td" style="left:106px;top:212.25px;color:#ff1010">0.01</div>
<div class="t td" style="left:167px;top:212.25px;color:#ff1010">0.01 | 0.01</div>
<div class="t td" style="left:256px;top:212.25px;color:#ff1010">1</div>
<div class="t td" style="left:292px;top:212.25px;color:#ff1010">6.98</div>
<div class="t td" style="left:392px;top:212.25px;color:#ff1010">1.30 %</div>
<div class="t td" style="left:468px;top:212.25px;color:#c4cce0">0</div>
<div class="t td" style="left:542px;top:212.25px;color:#c4cce0">545.85</div>
<div class="t td" style="left:642px;top:212.25px;color:#c4cce0">0</div>
<div class="t td" style="left:742px;top:212.25px;color:#c4cce0">0.00 %</div>
<div class="t td" style="left:842px;top:212.25px;color:#c4cce0">0</div>
<div class="t td" style="left:942px;top:212.25px;color:#c4cce0">0.00 %</div>
<div class="t td" style="left:1042px;top:212.25px;color:#c4cce0">0:34:28 | 0:34:28 | 0:34:28</div>
<div class="t td" style="left:1281px;top:212.25px;color:#c4cce0">10</div>
<div class="t td" style="left:5px;top:229.75px;color:#c4cce0">2026.02.25</div>
<div class="t td" style="left:106px;top:229.75px;color:#ff1010">0.02</div>
<div class="t td" style="left:167px;top:229.75px;color:#ff1010">0.01 | 0.01</div>
<div class="t td" style="left:256px;top:229.75px;color:#ff1010">2</div>
<div class="t td" style="left:292px;top:229.75px;color:#ff1010">19.86</div>
<div class="t td" style="left:392px;top:229.75px;color:#ff1010">3.83 %</div>
<div class="t td" style="left:468px;top:229.75px;color:#c4cce0">0</div>
<div class="t td" style="left:542px;top:229.75px;color:#c4cce0">538.87</div>
<div class="t td" style="left:642px;top:229.75px;color:#c4cce0">0</div>
<div class="t td" style="left:742px;top:229.75px;color:#c4cce0">0.00 %</div>
<div class="t td" style="left:842px;top:229.75px;color:#c4cce0">0</div>
<div class="t td" style="left:942px;top:229.75px;color:#c4cce0">0.00 %</div>
<div class="t td" style="left:1042px;top:229.75px;color:#c4cce0">0:04:56 | 1:45:53 | 3:26:50</div>
<div class="t td" style="left:1281px;top:229.75px;color:#c4cce0">10</div>
<div class="t td" style="left:5px;top:247.25px;color:#c4cce0">2026.02.23</div>
<div class="t td" style="left:106px;top:247.25px;color:#ff1010">0.01</div>
<div class="t td" style="left:167px;top:247.25px;color:#ff1010">0.01 | 0.01</div>
<div class="t td" style="left:256px;top:247.25px;color:#ff1010">1</div>
<div class="t td" style="left:292px;top:247.25px;color:#ff1010">8.76</div>
<div class="t td" style="left:392px;top:247.25px;color:#ff1010">1.72 %</div>
<div class="t td" style="left:468px;top:247.25px;color:#c4cce0">0</div>
<div class="t td" style="left:542px;top:247.25px;color:#c4cce0">519.01</div>
<div class="t td" style="left:642px;top:247.25px;color:#c4cce0">0</div>
<div class="t td" style="left:742px;top:247.25px;color:#c4cce0">0.00 %</div>
<div class="t td" style="left:842px;top:247.25px;color:#c4cce0">0</div>
<div class="t td" style="left:942px;top:247.25px;color:#c4cce0">0.00 %</div>
<div class="t td" style="left:1042px;top:247.25px;color:#c4cce0">0:06:31 | 0:06:31 | 0:06:31</div>
<div class="t td" style="left:1281px;top:247.25px;color:#c4cce0">10</div>
<div class="t td" style="left:5px;top:264.75px;color:#c4cce0">2026.02.20</div>
<div class="t td" style="left:106px;top:264.75px;color:#ff1010">0.02</div>
<div class="t td" style="left:167px;top:264.75px;color:#ff1010">0.01 | 0.01</div>
<div class="t td" style="left:256px;top:264.75px;color:#ff1010">2</div>
<div class="t td" style="left:292px;top:264.75px;color:#ff1010">13.76</div>
<div class="t td" style="left:392px;top:264.75px;color:#ff1010">2.77 %</div>
<div class="t td" style="left:468px;top:264.75px;color:#c4cce0">0</div>
<div class="t td" style="left:542px;top:264.75px;color:#c4cce0">510.25</div>
<div class="t td" style="left:642px;top:264.75px;color:#c4cce0">0</div>
<div class="t td" style="left:742px;top:264.75px;color:#c4cce0">0.00 %</div>
<div class="t td" style="left:842px;top:264.75px;color:#c4cce0">0</div>
<div class="t td" style="left:942px;top:264.75px;color:#c4cce0">0.00 %</div>
<div class="t td" style="left:1042px;top:264.75px;color:#c4cce0">0:22:29 | 0:22:34 | 0:22:40</div>
<div class="t td" style="left:1281px;top:264.75px;color:#c4cce0">10</div>
<div class="t td" style="left:5px;top:282.25px;color:#c4cce0">2026.02.19</div>
<div class="t td" style="left:106px;top:282.25px;color:#10f060">0.03</div>
<div class="t td" style="left:167px;top:282.25px;color:#10f060">0.01 | 0.01</div>
<div class="t td" style="left:256px;top:282.25px;color:#10f060">3</div>
<div class="t td" style="left:292px;top:282.25px;color:#10f060">-16.89</div>
<div class="t td" style="left:392px;top:282.25px;color:#10f060">-3.29 %</div>
<div class="t td" style="left:468px;top:282.25px;color:#c4cce0">0</div>
<div class="t td" style="left:542px;top:282.25px;color:#c4cce0">496.49</div>
<div class="t td" style="left:642px;top:282.25px;color:#c4cce0">0</div>
<div class="t td" style="left:742px;top:282.25px;color:#c4cce0">0.00 %</div>
<div class="t td" style="left:842px;top:282.25px;color:#c4cce0">0</div>
<div class="t td" style="left:942px;top:282.25px;color:#c4cce0">0.00 %</div>
<div class="t td" style="left:1042px;top:282.25px;color:#c4cce0">0:06:44 | 0:44:03 | 1:23:32</div>
<div class="t td" style="left:1281px;top:282.25px;color:#c4cce0">66</div>
<div class="t td" style="left:5px;top:299.75px;color:#c4cce0">2026.02.18</div>
<div class="t td" style="left:106px;top:299.75px;color:#ff1010">0.01</div>
<div class="t td" style="left:167px;top:299.75px;color:#ff1010">0.01 | 0.01</div>
<div class="t td" style="left:256px;top:299.75px;color:#ff1010">1</div>
<div class="t td" style="left:292px;top:299.75px;color:#ff1010">10.54</div>
<div class="t td" style="left:392px;top:299.75px;color:#ff1010">2.10 %</div>
<div class="t td" style="left:468px;top:299.75px;color:#c4cce0">0</div>
<div class="t td" style="left:542px;top:299.75px;color:#c4cce0">513.38</div>
<div class="t td" style="left:642px;top:299.75px;color:#c4cce0">0</div>
<div class="t td" style="left:742px;top:299.75px;color:#c4cce0">0.00 %</div>
<div class="t td" style="left:842px;top:299.75px;color:#c4cce0">0</div>
<div class="t td" style="left:942px;top:299.75px;color:#c4cce0">0.00 %</div>
<div class="t td" style="left:1042px;top:299.75px;color:#c4cce0">0:02:28 | 0:02:28 | 0:02:28</div>
<div class="t td" style="left:1281px;top:299.75px;color:#c4cce0">10</div>
<div class="t td" style="left:5px;top:317.25px;color:#c4cce0">2026.02.17</div>
<div class="t td" style="left:106px;top:317.25px;color:#ff1010">0.04</div>
<div class="t td" style="left:167px;top:317.25px;color:#ff1010">0.01 | 0.01</div>
<div class="t td" style="left:256px;top:317.25px;color:#ff1010">4</div>
<div class="t td" style="left:292px;top:317.25px;color:#ff1010">38.44</div>
<div class="t td" style="left:392px;top:317.25px;color:#ff1010">8.28 %</div>
<div class="t td" style="left:468px;top:317.25px;color:#c4cce0">0</div>
<div class="t td" style="left:542px;top:317.25px;color:#c4cce0">502.84</div>
<div class="t td" style="left:642px;top:317.25px;color:#c4cce0">0</div>
<div class="t td" style="left:742px;top:317.25px;color:#c4cce0">0.00 %</div>
<div class="t td" style="left:842px;top:317.25px;color:#c4cce0">0</div>
<div class="t td" style="left:942px;top:317.25px;color:#c4cce0">0.00 %</div>
<div class="t td" style="left:1042px;top:317.25px;color:#c4cce0">0:00:03 | 0:02:35 | 0:09:19</div>
<div class="t td" style="left:1281px;top:317.25px;color:#c4cce0">10</div>
<div class="t td" style="left:5px;top:334.75px;color:#c4cce0">2026.02.13</div>
<div class="t td" style="left:106px;top:334.75px;color:#ff1010">0.01</div>
<div class="t td" style="left:167px;top:334.75px;color:#ff1010">0.01 | 0.01</div>
<div class="t td" style="left:256px;top:334.75px;color:#ff1010">1</div>
<div class="t td" style="left:292px;top:334.75px;color:#ff1010">14.62</div>
<div class="t td" style="left:392px;top:334.75px;color:#ff1010">3.25 %</div>
<div class="t td" style="left:468px;top:334.75px;color:#c4cce0">0</div>
<div class="t td" style="left:542px;top:334.75px;color:#c4cce0">464.40</div>
<div class="t td" style="left:642px;top:334.75px;color:#c4cce0">0</div>
<div class="t td" style="left:742px;top:334.75px;color:#c4cce0">0.00 %</div>
<div class="t td" style="left:842px;top:334.75px;color:#c4cce0">0</div>
<div class="t td" style="left:942px;top:334.75px;color:#c4cce0">0.00 %</div>
<div class="t td" style="left:1042px;top:334.75px;color:#c4cce0">0:19:53 | 0:19:53 | 0:19:53</div>
<div class="t td" style="left:1281px;top:334.75px;color:#c4cce0">10</div>
<div class="t td" style="left:5px;top:352.25px;color:#c4cce0">2026.02.12</div>
<div class="t td" style="left:106px;top:352.25px;color:#10f060">0.02</div>
<div class="t td" style="left:167px;top:352.25px;color:#10f060">0.01 | 0.01</div>
<div class="t td" style="left:256px;top:352.25px;color:#10f060">2</div>
<div class="t td" style="left:292px;top:352.25px;color:#10f060">-36.17</div>
<div class="t td" style="left:392px;top:352.25px;color:#10f060">-7.44 %</div>
<div class="t td" style="left:468px;top:352.25px;color:#c4cce0">0</div>
<div class="t td" style="left:542px;top:352.25px;color:#c4cce0">449.78</div>
<div class="t td" style="left:642px;top:352.25px;color:#c4cce0">0</div>
<div class="t td" style="left:742px;top:352.25px;color:#c4cce0">0.00 %</div>
<div class="t td" style="left:842px;top:352.25px;color:#c4cce0">0</div>
<div class="t td" style="left:942px;top:352.25px;color:#c4cce0">0.00 %</div>
<div class="t td" style="left:1042px;top:352.25px;color:#c4cce0">0:04:11 | 0:39:08 | 1:14:05</div>
<div class="t td" style="left:1281px;top:352.25px;color:#c4cce0">50</div>
<div class="t td" style="left:5px;top:369.75px;color:#c4cce0">2026.02.06</div>
<div class="t td" style="left:106px;top:369.75px;color:#ff1010">0.01</div>
<div class="t td" style="left:167px;top:369.75px;color:#ff1010">0.01 | 0.01</div>
<div class="t td" style="left:256px;top:369.75px;color:#ff1010">1</div>
<div class="t td" style="left:292px;top:369.75px;color:#ff1010">23.32</div>
<div class="t td" style="left:392px;top:369.75px;color:#ff1010">5.04 %</div>
<div class="t td" style="left:468px;top:369.75px;color:#c4cce0">0</div>
<div class="t td" style="left:542px;top:369.75px;color:#c4cce0">485.95</div>
<div class="t td" style="left:642px;top:369.75px;color:#c4cce0">0</div>
<div class="t td" style="left:742px;top:369.75px;color:#c4cce0">0.00 %</div>
<div class="t td" style="left:842px;top:369.75px;color:#c4cce0">0</div>
<div class="t td" style="left:942px;top:369.75px;color:#c4cce0">0.00 %</div>
<div class="t td" style="left:1042px;top:369.75px;color:#c4cce0">2:53:16 | 2:53:16 | 2:53:16</div>
<div class="t td" style="left:1281px;top:369.75px;color:#c4cce0">10</div>
<div class="t td" style="left:5px;top:387.25px;color:#c4cce0">2026.02.05</div>
<div class="t td" style="left:106px;top:387.25px;color:#ff1010">0.01</div>
<div class="t td" style="left:167px;top:387.25px;color:#ff1010">0.01 | 0.01</div>
<div class="t td" style="left:256px;top:387.25px;color:#ff1010">1</div>
<div class="t td" style="left:292px;top:387.25px;color:#ff1010">32.48</div>
<div class="t td" style="left:392px;top:387.25px;color:#ff1010">7.55 %</div>
<div class="t td" style="left:468px;top:387.25px;color:#c4cce0">0</div>
<div class="t td" style="left:542px;top:387.25px;color:#c4cce0">462.63</div>
<div class="t td" style="left:642px;top:387.25px;color:#c4cce0">0</div>
<div class="t td" style="left:742px;top:387.25px;color:#c4cce0">0.00 %</div>
<div class="t td" style="left:842px;top:387.25px;color:#c4cce0">0</div>
<div class="t td" style="left:942px;top:387.25px;color:#c4cce0">0.00 %</div>
<div class="t td" style="left:1042px;top:387.25px;color:#c4cce0">0:39:40 | 0:39:40 | 0:39:40</div>
<div class="t td" style="left:1281px;top:387.25px;color:#c4cce0">10</div>
<div class="t td" style="left:5px;top:404.75px;color:#c4cce0">2026.02.04</div>
<div class="t td" style="left:106px;top:404.75px;color:#ff1010">0.02</div>
<div class="t td" style="left:167px;top:404.75px;color:#ff1010">0.01 | 0.01</div>
<div class="t td" style="left:256px;top:404.75px;color:#ff1010">2</div>
<div class="t td" style="left:292px;top:404.75px;color:#ff1010">57.17</div>
<div class="t td" style="left:392px;top:404.75px;color:#ff1010">15.33 %</div>
<div class="t td" style="left:468px;top:404.75px;color:#c4cce0">0</div>
<div class="t td" style="left:542px;top:404.75px;color:#c4cce0">430.15</div>
<div class="t td" style="left:642px;top:404.75px;color:#c4cce0">0</div>
<div class="t td" style="left:742px;top:404.75px;color:#c4cce0">0.00 %</div>
<div class="t td" style="left:842px;top:404.75px;color:#c4cce0">0</div>
<div class="t td" style="left:942px;top:404.75px;color:#c4cce0">0.00 %</div>
<div class="t td" style="left:1042px;top:404.75px;color:#c4cce0">0:50:17 | 4:34:43 | 8:19:10</div>
<div class="t td" style="left:1281px;top:404.75px;color:#c4cce0">10</div>
<div class="t td" style="left:5px;top:422.25px;color:#c4cce0">2026.02.03</div>
<div class="t td" style="left:106px;top:422.25px;color:#ff1010">0.01</div>
<div class="t td" style="left:167px;top:422.25px;color:#ff1010">0.01 | 0.01</div>
<div class="t td" style="left:256px;top:422.25px;color:#ff1010">1</div>
<div class="t td" style="left:292px;top:422.25px;color:#ff1010">42.86</div>
<div class="t td" style="left:392px;top:422.25px;color:#ff1010">12.98 %</div>
<div class="t td" style="left:468px;top:422.25px;color:#c4cce0">0</div>
<div class="t td" style="left:542px;top:422.25px;color:#c4cce0">372.98</div>
<div class="t td" style="left:642px;top:422.25px;color:#c4cce0">0</div>
<div class="t td" style="left:742px;top:422.25px;color:#c4cce0">0.00 %</div>
<div class="t td" style="left:842px;top:422.25px;color:#c4cce0">0</div>
<div class="t td" style="left:942px;top:422.25px;color:#c4cce0">0.00 %</div>
<div class="t td" style="left:1042px;top:422.25px;color:#c4cce0">1:05:50 | 1:05:50 | 1:05:50</div>
<div class="t td" style="left:1281px;top:422.25px;color:#c4cce0">10</div>
<div class="t td" style="left:5px;top:439.75px;color:#c4cce0">2026.02.02</div>
<div class="t td" style="left:106px;top:439.75px;color:#ff1010">0.02</div>
<div class="t td" style="left:167px;top:439.75px;color:#ff1010">0.01 | 0.01</div>
<div class="t td" style="left:256px;top:439.75px;color:#ff1010">2</div>
<div class="t td" style="left:292px;top:439.75px;color:#ff1010">83.69</div>
<div class="t td" style="left:392px;top:439.75px;color:#ff1010">33.96 %</div>
<div class="t td" style="left:468px;top:439.75px;color:#c4cce0">0</div>
<div class="t td" style="left:542px;top:439.75px;color:#c4cce0">330.12</div>
<div class="t td" style="left:642px;top:439.75px;color:#c4cce0">0</div>
<div class="t td" style="left:742px;top:439.75px;color:#c4cce0">0.00 %</div>
<div class="t td" style="left:842px;top:439.75px;color:#c4cce0">0</div>
<div class="t td" style="left:942px;top:439.75px;color:#c4cce0">0.00 %</div>
<div class="t td" style="left:1042px;top:439.75px;color:#c4cce0">0:04:59 | 1:27:36 | 2:50:13</div>
<div class="t td" style="left:1281px;top:439.75px;color:#c4cce0">10</div>
<div class="t td" style="left:5px;top:457.25px;color:#c4cce0">2026.01.30</div>
<div class="t td" style="left:106px;top:457.25px;color:#ff1010">0.02</div>
<div class="t td" style="left:167px;top:457.25px;color:#ff1010">0.01 | 0.01</div>
<div class="t td" style="left:256px;top:457.25px;color:#ff1010">2</div>
<div class="t td" style="left:292px;top:457.25px;color:#ff1010">69.93</div>
<div class="t td" style="left:392px;top:457.25px;color:#ff1010">39.62 %</div>
<div class="t td" style="left:468px;top:457.25px;color:#c4cce0">0</div>
<div class="t td" style="left:542px;top:457.25px;color:#c4cce0">246.43</div>
<div class="t td" style="left:642px;top:457.25px;color:#c4cce0">0</div>
<div class="t td" style="left:742px;top:457.25px;color:#c4cce0">0.00 %</div>
<div class="t td" style="left:842px;top:457.25px;color:#c4cce0">0</div>
<div class="t td" style="left:942px;top:457.25px;color:#c4cce0">0.00 %</div>
<div class="t td" style="left:1042px;top:457.25px;color:#c4cce0">0:06:28 | 0:09:09 | 0:11:50</div>
<div class="t td" style="left:1281px;top:457.25px;color:#c4cce0">10</div>
<div class="t td" style="left:5px;top:474.75px;color:#c4cce0">2026.01.29</div>
<div class="t td" style="left:106px;top:474.75px;color:#10f060">0.02</div>
<div class="t td" style="left:167px;top:474.75px;color:#10f060">0.01 | 0.01</div>
<div class="t td" style="left:256px;top:474.75px;color:#10f060">2</div>
<div class="t td" style="left:292px;top:474.75px;color:#10f060">-63.70</div>
<div class="t td" style="left:392px;top:474.75px;color:#10f060">-26.52 %</div>
<div class="t td" style="left:468px;top:474.75px;color:#c4cce0">0</div>
<div class="t td" style="left:542px;top:474.75px;color:#c4cce0">176.50</div>
<div class="t td" style="left:642px;top:474.75px;color:#c4cce0">0</div>
<div class="t td" style="left:742px;top:474.75px;color:#c4cce0">0.00 %</div>
<div class="t td" style="left:842px;top:474.75px;color:#c4cce0">0</div>
<div class="t td" style="left:942px;top:474.75px;color:#c4cce0">0.00 %</div>
<div class="t td" style="left:1042px;top:474.75px;color:#c4cce0">0:00:17 | 1:23:39 | 2:47:01</div>
<div class="t td" style="left:1281px;top:474.75px;color:#c4cce0">50</div>
<div class="t td" style="left:5px;top:492.25px;color:#c4cce0">2026.01.28</div>
<div class="t td" style="left:106px;top:492.25px;color:#ff1010">0.03</div>
<div class="t td" style="left:167px;top:492.25px;color:#ff1010">0.01 | 0.01</div>
<div class="t td" style="left:256px;top:492.25px;color:#ff1010">3</div>
<div class="t td" style="left:292px;top:492.25px;color:#ff1010">36.75</div>
<div class="t td" style="left:392px;top:492.25px;color:#ff1010">18.06 %</div>
<div class="t td" style="left:468px;top:492.25px;color:#c4cce0">0</div>
<div class="t td" style="left:542px;top:492.25px;color:#c4cce0">240.20</div>
<div class="t td" style="left:642px;top:492.25px;color:#c4cce0">0</div>
<div class="t td" style="left:742px;top:492.25px;color:#c4cce0">0.00 %</div>
<div class="t td" style="left:842px;top:492.25px;color:#c4cce0">0</div>
<div class="t td" style="left:942px;top:492.25px;color:#c4cce0">0.00 %</div>
<div class="t td" style="left:1042px;top:492.25px;color:#c4cce0">0:04:56 | 0:24:21 | 0:44:03</div>
<div class="t td" style="left:1281px;top:492.25px;color:#c4cce0">10</div>
<div class="t td" style="left:5px;top:509.75px;color:#c4cce0">2026.01.26</div>
<div class="t td" style="left:106px;top:509.75px;color:#10f060">0.03</div>
<div class="t td" style="left:167px;top:509.75px;color:#10f060">0.01 | 0.01</div>
<div class="t td" style="left:256px;top:509.75px;color:#10f060">3</div>
<div class="t td" style="left:292px;top:509.75px;color:#10f060">-3.19</div>
<div class="t td" style="left:392px;top:509.75px;color:#10f060">-1.54 %</div>
<div class="t td" style="left:468px;top:509.75px;color:#c4cce0">0</div>
<div class="t td" style="left:542px;top:509.75px;color:#c4cce0">203.45</div>
<div class="t td" style="left:642px;top:509.75px;color:#c4cce0">0</div>
<div class="t td" style="left:742px;top:509.75px;color:#c4cce0">0.00 %</div>
<div class="t td" style="left:842px;top:509.75px;color:#c4cce0">0</div>
<div class="t td" style="left:942px;top:509.75px;color:#c4cce0">0.00 %</div>
<div class="t td" style="left:1042px;top:509.75px;color:#c4cce0">0:02:54 | 18:04:19 | 51:11:22</div>
<div class="t td" style="left:1281px;top:509.75px;color:#c4cce0">66</div>
<div class="t td" style="left:5px;top:527.25px;color:#c4cce0">2026.01.23</div>
<div class="t td" style="left:106px;top:527.25px;color:#10f060">0.02</div>
<div class="t td" style="left:167px;top:527.25px;color:#10f060">0.01 | 0.01</div>
<div class="t td" style="left:256px;top:527.25px;color:#10f060">2</div>
<div class="t td" style="left:292px;top:527.25px;color:#10f060">-28.71</div>
<div class="t td" style="left:392px;top:527.25px;color:#10f060">-12.20 %</div>
<div class="t td" style="left:468px;top:527.25px;color:#c4cce0">0</div>
<div class="t td" style="left:542px;top:527.25px;color:#c4cce0">206.64</div>
<div class="t td" style="left:642px;top:527.25px;color:#c4cce0">0</div>
<div class="t td" style="left:742px;top:527.25px;color:#c4cce0">0.00 %</div>
<div class="t td" style="left:842px;top:527.25px;color:#c4cce0">0</div>
<div class="t td" style="left:942px;top:527.25px;color:#c4cce0">0.00 %</div>
<div class="t td" style="left:1042px;top:527.25px;color:#c4cce0">0:00:35 | 1:15:15 | 2:29:56</div>
<div class="t td" style="left:1281px;top:527.25px;color:#c4cce0">50</div>
<div class="t td" style="left:5px;top:544.75px;color:#c4cce0">2026.01.22</div>
<div class="t td" style="left:106px;top:544.75px;color:#ff1010">0.03</div>
<div class="t td" style="left:167px;top:544.75px;color:#ff1010">0.01 | 0.01</div>
<div class="t td" style="left:256px;top:544.75px;color:#ff1010">3</div>
<div class="t td" style="left:292px;top:544.75px;color:#ff1010">35.35</div>
<div class="t td" style="left:392px;top:544.75px;color:#ff1010">17.68 %</div>
<div class="t td" style="left:468px;top:544.75px;color:#c4cce0">0</div>
<div class="t td" style="left:542px;top:544.75px;color:#c4cce0">235.35</div>
<div class="t td" style="left:642px;top:544.75px;color:#c4cce0">0</div>
<div class="t td" style="left:742px;top:544.75px;color:#c4cce0">0.00 %</div>
<div class="t td" style="left:842px;top:544.75px;color:#c4cce0">0</div>
<div class="t td" style="left:942px;top:544.75px;color:#c4cce0">0.00 %</div>
<div class="t td" style="left:1042px;top:544.75px;color:#c4cce0">0:45:13 | 0:51:21 | 0:54:26</div>
<div class="t td" style="left:1281px;top:544.75px;color:#c4cce0">10</div>
<div class="t td" style="left:5px;top:562.25px;color:#c4cce0">2026.01.21</div>
<div class="t td" style="left:106px;top:562.25px;color:#c4cce0">0.00</div>
<div class="t td" style="left:167px;top:562.25px;color:#c4cce0">0.00 | 0.00</div>
<div class="t td" style="left:256px;top:562.25px;color:#c4cce0">0</div>
<div class="t td" style="left:292px;top:562.25px;color:#c4cce0">0.00</div>
<div class="t td" style="left:392px;top:562.25px;color:#c4cce0">0.00 %</div>
<div class="t td" style="left:468px;top:562.25px;color:#ff1010">200</div>
<div class="t td" style="left:542px;top:562.25px;color:#c4cce0">200.00</div>
<div class="t td" style="left:642px;top:562.25px;color:#c4cce0">0</div>
<div class="t td" style="left:742px;top:562.25px;color:#c4cce0">0.00 %</div>
<div class="t td" style="left:842px;top:562.25px;color:#c4cce0">0</div>
<div class="t td" style="left:942px;top:562.25px;color:#c4cce0">0.00 %</div>
<div class="t th" style="left:5px;top:581px">合计</div>
<div class="t td" style="left:106px;top:580.00px;color:#ff1010">0.39</div>
<div class="t td" style="left:292px;top:580.00px;color:#ff1010">345.85</div>
<div class="t td" style="left:392px;top:580.00px;color:#ff1010">122.46 %</div>
<div class="t td" style="left:468px;top:580.00px;color:#ff1010">200</div>
<div class="t td" style="left:642px;top:580.00px;color:#c4cce0">0</div>
<div class="t td" style="left:742px;top:580.00px;color:#c4cce0">0 %</div>
<div class="t td" style="left:842px;top:580.00px;color:#c4cce0">0</div>
<div class="t td" style="left:942px;top:580.00px;color:#c4cce0">0 %</div>
</div>
<div class="a" style="left:398px;top:785px;width:1448px;height:2px;background:#fff"></div>
<div class="a" style="left:398px;top:787px;width:1448px;height:1px;background:#000"></div>
<div class="a" style="left:398px;top:787px;width:2px;height:25px;background:#707070"></div>
<div class="a" id="tabs" style="left:400px;top:788px;width:1446px;height:24px;background:#f0f0f0;overflow:hidden">
<div class="a" style="left:0;top:0;width:1446px;height:1px;background:#fff"></div>
<div class="t ct" style="left:18px;top:1px;letter-spacing:-.5px">EURJPY,H1</div>
<div class="t ct" style="left:122px;top:1px">XAUUSD,M1</div>
<div class="t ct" style="left:242px;top:1px">XAUUSD,M15</div>
<div class="t ct" style="left:371px;top:1px">XAUUSD,M30</div>
<div class="t ct" style="left:499px;top:1px">XAUUSD,H1</div>
<div class="t ct" style="left:615px;top:1px">XAUUSD,H4</div>
<div class="t ct" style="left:730px;top:1px">XAUUSD,Daily</div>
<div class="t ct" style="left:859px;top:1px">XAUUSD,Monthly</div>
<div class="a" style="left:109px;top:2px;width:1px;height:19px;background:#555"></div>
<div class="a" style="left:229px;top:2px;width:1px;height:19px;background:#555"></div>
<div class="a" style="left:357px;top:2px;width:1px;height:19px;background:#555"></div>
<div class="a" style="left:485px;top:2px;width:1px;height:19px;background:#555"></div>
<div class="a" style="left:601px;top:2px;width:1px;height:19px;background:#555"></div>
<div class="a" style="left:717px;top:2px;width:1px;height:19px;background:#555"></div>
<div class="a" style="left:845px;top:2px;width:1px;height:19px;background:#555"></div>
<div class="a" style="left:1381px;top:2px;width:1px;height:19px;background:#555"></div>
<div class="t ct" style="right:80px;top:1px">XAUUSD,H1</div>
<div class="t ct" style="left:1395px;top:1px;width:16px;overflow:hidden">EURUSD</div>
<div class="a" style="left:1412px;top:0;width:36px;height:24px;background:#f0f0f0"></div>
<svg width="30" height="10" style="left:1419px;top:6px" viewBox="0 0 30 10"><path d="M4 0v9L0 4.500z" fill="#8a8a8a"/><path d="M24 0v9l4-4.500z" fill="#000"/></svg>
</div>
<div class="a" style="left:0;top:812px;width:1846px;height:3px;background:#fff"></div>
<div class="a" style="left:0;top:817px;width:1846px;height:1px;background:#b4b4b4"></div>
<div class="a" id="status" style="left:0;top:818px;width:1846px;height:26px;background:#f0f0f0;overflow:hidden">
<div class="t" style="left:-6px;top:2px;font-size:15px;line-height:20px">试过的柱数</div>
<div class="t" style="left:507px;top:2px;font-size:15px;line-height:20px;letter-spacing:.5px">34460</div>
<div class="t" style="left:601px;top:2px;font-size:15px;line-height:20px">用于复盘的即时价数量</div>
<div class="t" style="left:1107px;top:2px;font-size:15px;line-height:20px;letter-spacing:.5px">143949847</div>
<div class="t" style="left:1237px;top:2px;font-size:15px;line-height:20px">复盘模型的质量</div>
<div class="t" style="left:1750px;top:2px;width:77px;text-align:right;font-size:15px;line-height:20px;letter-spacing:.3px">90.00%</div>
<div class="a" style="left:1832px;top:0;width:14px;height:26px;background:#fafafa;border-left:1px solid #d0d0d0"></div>
<div class="a" style="left:1833px;top:21px;width:13px;height:5px;background:#cdcdcd"></div>
<svg width="10" height="6" style="left:1836px;top:7px" viewBox="0 0 10 6"><path d="M.5 5.500l4.500-4.500 4.500 4.500" stroke="#333" stroke-width="1.600" fill="none"/></svg>
</div>
<div class="a" id="ime" style="left:1367px;top:773px;width:347px;height:37px;background:#fff;border-radius:9px;box-shadow:0 1px 4px rgba(0,0,0,.25)">
<svg width="24" height="21" style="left:11px;top:9px" viewBox="0 0 24 21" ><path d="M21.500 4.500Q12 .5 4.500 4.500 1 8.500 8 9.500l9 1.500q6 2 0 4.500-7 2.500-14-.2" fill="none" stroke="#f07218" stroke-width="4" stroke-linecap="round"/></svg>
<div class="a" style="left:44px;top:6px;width:1px;height:24px;background:#e2e2e2"></div>
<div class="a" style="left:56px;top:7px;font-size:21px;line-height:24px;font-weight:500;color:#111">中</div>
<svg width="16" height="20" style="left:93px;top:10px" viewBox="0 0 16 20" ><circle cx="4.500" cy="5" r="2.600" fill="none" stroke="#111" stroke-width="1.500"/><path d="M10.500 12.500q2.500.5 1.500 3.500l-1.800 3.200h-1.700l1.200-3.200q-1.500-.5-1-2 .5-1.500 1.800-1.500z" fill="#111"/></svg>
<svg width="23" height="23" style="left:124px;top:8px" viewBox="0 0 23 23" ><circle cx="11.500" cy="11.500" r="9.800" fill="none" stroke="#111" stroke-width="1.600"/><path d="M6.500 13q5 6 10 0" fill="none" stroke="#111" stroke-width="1.600" stroke-linecap="round"/><path d="M8 7.500v2.500M15 7.500v2.500" stroke="#111" stroke-width="1.800" stroke-linecap="round"/><path d="M17 3l3.500 1.500-2 2.500" fill="#fff" stroke="#fff" stroke-width="2"/><path d="M17.500 3.500l2.500 1.200-1.500 2" fill="none" stroke="#111" stroke-width="1.300"/></svg>
<svg width="20" height="24" style="left:163px;top:8px" viewBox="0 0 20 24" ><rect x="6" y="1" width="8" height="14" rx="4" fill="none" stroke="#111" stroke-width="1.600"/><path d="M2 10.500q0 7.500 8 7.500t8-7.500M10 18v5" fill="none" stroke="#111" stroke-width="1.600" stroke-linecap="round"/></svg>
<svg width="22" height="19" style="left:200px;top:10px" viewBox="0 0 22 19" ><rect x="1" y="1" width="20" height="17" rx="2.500" fill="none" stroke="#111" stroke-width="1.600"/><path d="M6 5.500h1.500M10.200 5.500h1.500M14.500 5.500h1.500M6 9h1.500M10.200 9h1.500M14.500 9h1.500" stroke="#111" stroke-width="1.600"/><path d="M6 13.500h10" stroke="#111" stroke-width="1.800"/></svg>
<svg width="26" height="28" style="left:239px;top:2px" viewBox="0 0 26 28" ><defs><linearGradient id="sg" x1="0" y1="0" x2="1" y2="1"><stop offset="0" stop-color="#f4502a"/><stop offset=".45" stop-color="#a070ff"/><stop offset="1" stop-color="#48e4ff"/></linearGradient></defs><path d="M1.300 10.500l5-1.800q3.500 2.300 7 0l5.500 1.800v6h-2.300v8.500H4v-8.500H1.300z" fill="url(#sg)"/><circle cx="20" cy="6" r="5" fill="#fb4f2c"/></svg>
<svg width="21" height="21" style="left:277px;top:9px" viewBox="0 0 21 21" ><rect x="1" y="1" width="7.500" height="7.500" rx="1" fill="none" stroke="#111" stroke-width="1.600"/><circle cx="15.700" cy="4.800" r="3.900" fill="none" stroke="#111" stroke-width="1.600"/><rect x="1" y="12" width="7.500" height="7.500" rx="1" fill="none" stroke="#111" stroke-width="1.600"/><rect x="12" y="12" width="7.500" height="7.500" rx="1" fill="none" stroke="#111" stroke-width="1.600"/></svg>
<svg width="30" height="30" style="left:311px;top:4px" viewBox="0 0 30 30" ><circle cx="14" cy="14.500" r="12.600" fill="#fff" stroke="#f6e6e6" stroke-width="1"/><path d="M7 3.500q2.500 2 4.500.5 2.500 1.500 5-.5" fill="none" stroke="#ececf4" stroke-width="1.200"/><path d="M3 10.500q8-3 16.500-1.300l.5 5.300q-4 1.800-8 1.500-3 2.500-7.500 1-1.500-3-1.500-6.500z" fill="#f0741c"/><path d="M6.500 12.500l.8 2.500" stroke="#222" stroke-width="1.700" stroke-linecap="round"/><path d="M13.500 12.500l2.500-1.500" stroke="#222" stroke-width="1.500" stroke-linecap="round"/><path d="M6.500 18.500q3 1.500 5-.5" fill="none" stroke="#222" stroke-width="2" stroke-linecap="round"/><path d="M14 21l3-2.500" stroke="#555" stroke-width="1.300" stroke-linecap="round"/><path d="M25 6l1.200 2.800 2.800 1.200-2.800 1.200-1.200 2.800-1.200-2.800-2.800-1.200 2.800-1.200z" fill="#fbe040"/></svg>
</div>
<div class="a" style="left:0;top:0;width:1846px;height:844px;pointer-events:none;clip-path:inset(100px 0 58px 403px)"><svg width="1846" height="844" style="left:0;top:0" font-family="Liberation Sans,sans-serif" font-weight="bold" font-size="35.200"><text transform="translate(-191.9 -72.0) rotate(-32.8)" fill="#fff" fill-opacity=".09">EAHub.cn</text><text transform="translate(58.1 -72.0) rotate(-32.8)" fill="#fff" fill-opacity=".09">EAHub.cn</text><text transform="translate(308.1 -72.0) rotate(-32.8)" fill="#fff" fill-opacity=".09">EAHub.cn</text><text transform="translate(558.1 -72.0) rotate(-32.8)" fill="#fff" fill-opacity=".09">EAHub.cn</text><text transform="translate(808.1 -72.0) rotate(-32.8)" fill="#fff" fill-opacity=".09">EAHub.cn</text><text transform="translate(1058.1 -72.0) rotate(-32.8)" fill="#fff" fill-opacity=".09">EAHub.cn</text><text transform="translate(1308.1 -72.0) rotate(-32.8)" fill="#fff" fill-opacity=".09">EAHub.cn</text><text transform="translate(1558.1 -72.0) rotate(-32.8)" fill="#fff" fill-opacity=".09">EAHub.cn</text><text transform="translate(1808.1 -72.0) rotate(-32.8)" fill="#fff" fill-opacity=".09">EAHub.cn</text><text transform="translate(-191.9 178.0) rotate(-32.8)" fill="#fff" fill-opacity=".09">EAHub.cn</text><text transform="translate(58.1 178.0) rotate(-32.8)" fill="#fff" fill-opacity=".09">EAHub.cn</text><text transform="translate(308.1 178.0) rotate(-32.8)" fill="#fff" fill-opacity=".09">EAHub.cn</text><text transform="translate(558.1 178.0) rotate(-32.8)" fill="#fff" fill-opacity=".09">EAHub.cn</text><text transform="translate(808.1 178.0) rotate(-32.8)" fill="#fff" fill-opacity=".09">EAHub.cn</text><text transform="translate(1058.1 178.0) rotate(-32.8)" fill="#fff" fill-opacity=".09">EAHub.cn</text><text transform="translate(1308.1 178.0) rotate(-32.8)" fill="#fff" fill-opacity=".09">EAHub.cn</text><text transform="translate(1558.1 178.0) rotate(-32.8)" fill="#fff" fill-opacity=".09">EAHub.cn</text><text transform="translate(1808.1 178.0) rotate(-32.8)" fill="#fff" fill-opacity=".09">EAHub.cn</text><text transform="translate(-191.9 428.0) rotate(-32.8)" fill="#fff" fill-opacity=".09">EAHub.cn</text><text transform="translate(58.1 428.0) rotate(-32.8)" fill="#fff" fill-opacity=".09">EAHub.cn</text><text transform="translate(308.1 428.0) rotate(-32.8)" fill="#fff" fill-opacity=".09">EAHub.cn</text><text transform="translate(558.1 428.0) rotate(-32.8)" fill="#fff" fill-opacity=".09">EAHub.cn</text><text transform="translate(808.1 428.0) rotate(-32.8)" fill="#fff" fill-opacity=".09">EAHub.cn</text><text transform="translate(1058.1 428.0) rotate(-32.8)" fill="#fff" fill-opacity=".09">EAHub.cn</text><text transform="translate(1308.1 428.0) rotate(-32.8)" fill="#fff" fill-opacity=".09">EAHub.cn</text><text transform="translate(1558.1 428.0) rotate(-32.8)" fill="#fff" fill-opacity=".09">EAHub.cn</text><text transform="translate(1808.1 428.0) rotate(-32.8)" fill="#fff" fill-opacity=".09">EAHub.cn</text><text transform="translate(-191.9 678.0) rotate(-32.8)" fill="#fff" fill-opacity=".09">EAHub.cn</text><text transform="translate(58.1 678.0) rotate(-32.8)" fill="#fff" fill-opacity=".09">EAHub.cn</text><text transform="translate(308.1 678.0) rotate(-32.8)" fill="#fff" fill-opacity=".09">EAHub.cn</text><text transform="translate(558.1 678.0) rotate(-32.8)" fill="#fff" fill-opacity=".09">EAHub.cn</text><text transform="translate(808.1 678.0) rotate(-32.8)" fill="#fff" fill-opacity=".09">EAHub.cn</text><text transform="translate(1058.1 678.0) rotate(-32.8)" fill="#fff" fill-opacity=".09">EAHub.cn</text><text transform="translate(1308.1 678.0) rotate(-32.8)" fill="#fff" fill-opacity=".09">EAHub.cn</text><text transform="translate(1558.1 678.0) rotate(-32.8)" fill="#fff" fill-opacity=".09">EAHub.cn</text><text transform="translate(1808.1 678.0) rotate(-32.8)" fill="#fff" fill-opacity=".09">EAHub.cn</text><text transform="translate(-191.9 928.0) rotate(-32.8)" fill="#fff" fill-opacity=".09">EAHub.cn</text><text transform="translate(58.1 928.0) rotate(-32.8)" fill="#fff" fill-opacity=".09">EAHub.cn</text><text transform="translate(308.1 928.0) rotate(-32.8)" fill="#fff" fill-opacity=".09">EAHub.cn</text><text transform="translate(558.1 928.0) rotate(-32.8)" fill="#fff" fill-opacity=".09">EAHub.cn</text><text transform="translate(808.1 928.0) rotate(-32.8)" fill="#fff" fill-opacity=".09">EAHub.cn</text><text transform="translate(1058.1 928.0) rotate(-32.8)" fill="#fff" fill-opacity=".09">EAHub.cn</text><text transform="translate(1308.1 928.0) rotate(-32.8)" fill="#fff" fill-opacity=".09">EAHub.cn</text><text transform="translate(1558.1 928.0) rotate(-32.8)" fill="#fff" fill-opacity=".09">EAHub.cn</text><text transform="translate(1808.1 928.0) rotate(-32.8)" fill="#fff" fill-opacity=".09">EAHub.cn</text></svg></div>
<div class="a" style="left:0;top:0;width:1846px;height:844px;pointer-events:none;clip-path:polygon(evenodd,0 0,1846px 0,1846px 844px,0 844px,0 0,403px 100px,1846px 100px,1846px 786px,403px 786px,403px 100px)"><svg width="1846" height="844" style="left:0;top:0" font-family="Liberation Sans,sans-serif" font-weight="bold" font-size="35.200"><text transform="translate(-191.9 -72.0) rotate(-32.8)" fill="#fff" fill-opacity=".3" stroke="#8a8a8a" stroke-opacity=".42" stroke-width=".9">EAHub.cn</text><text transform="translate(58.1 -72.0) rotate(-32.8)" fill="#fff" fill-opacity=".3" stroke="#8a8a8a" stroke-opacity=".42" stroke-width=".9">EAHub.cn</text><text transform="translate(308.1 -72.0) rotate(-32.8)" fill="#fff" fill-opacity=".3" stroke="#8a8a8a" stroke-opacity=".42" stroke-width=".9">EAHub.cn</text><text transform="translate(558.1 -72.0) rotate(-32.8)" fill="#fff" fill-opacity=".3" stroke="#8a8a8a" stroke-opacity=".42" stroke-width=".9">EAHub.cn</text><text transform="translate(808.1 -72.0) rotate(-32.8)" fill="#fff" fill-opacity=".3" stroke="#8a8a8a" stroke-opacity=".42" stroke-width=".9">EAHub.cn</text><text transform="translate(1058.1 -72.0) rotate(-32.8)" fill="#fff" fill-opacity=".3" stroke="#8a8a8a" stroke-opacity=".42" stroke-width=".9">EAHub.cn</text><text transform="translate(1308.1 -72.0) rotate(-32.8)" fill="#fff" fill-opacity=".3" stroke="#8a8a8a" stroke-opacity=".42" stroke-width=".9">EAHub.cn</text><text transform="translate(1558.1 -72.0) rotate(-32.8)" fill="#fff" fill-opacity=".3" stroke="#8a8a8a" stroke-opacity=".42" stroke-width=".9">EAHub.cn</text><text transform="translate(1808.1 -72.0) rotate(-32.8)" fill="#fff" fill-opacity=".3" stroke="#8a8a8a" stroke-opacity=".42" stroke-width=".9">EAHub.cn</text><text transform="translate(-191.9 178.0) rotate(-32.8)" fill="#fff" fill-opacity=".3" stroke="#8a8a8a" stroke-opacity=".42" stroke-width=".9">EAHub.cn</text><text transform="translate(58.1 178.0) rotate(-32.8)" fill="#fff" fill-opacity=".3" stroke="#8a8a8a" stroke-opacity=".42" stroke-width=".9">EAHub.cn</text><text transform="translate(308.1 178.0) rotate(-32.8)" fill="#fff" fill-opacity=".3" stroke="#8a8a8a" stroke-opacity=".42" stroke-width=".9">EAHub.cn</text><text transform="translate(558.1 178.0) rotate(-32.8)" fill="#fff" fill-opacity=".3" stroke="#8a8a8a" stroke-opacity=".42" stroke-width=".9">EAHub.cn</text><text transform="translate(808.1 178.0) rotate(-32.8)" fill="#fff" fill-opacity=".3" stroke="#8a8a8a" stroke-opacity=".42" stroke-width=".9">EAHub.cn</text><text transform="translate(1058.1 178.0) rotate(-32.8)" fill="#fff" fill-opacity=".3" stroke="#8a8a8a" stroke-opacity=".42" stroke-width=".9">EAHub.cn</text><text transform="translate(1308.1 178.0) rotate(-32.8)" fill="#fff" fill-opacity=".3" stroke="#8a8a8a" stroke-opacity=".42" stroke-width=".9">EAHub.cn</text><text transform="translate(1558.1 178.0) rotate(-32.8)" fill="#fff" fill-opacity=".3" stroke="#8a8a8a" stroke-opacity=".42" stroke-width=".9">EAHub.cn</text><text transform="translate(1808.1 178.0) rotate(-32.8)" fill="#fff" fill-opacity=".3" stroke="#8a8a8a" stroke-opacity=".42" stroke-width=".9">EAHub.cn</text><text transform="translate(-191.9 428.0) rotate(-32.8)" fill="#fff" fill-opacity=".3" stroke="#8a8a8a" stroke-opacity=".42" stroke-width=".9">EAHub.cn</text><text transform="translate(58.1 428.0) rotate(-32.8)" fill="#fff" fill-opacity=".3" stroke="#8a8a8a" stroke-opacity=".42" stroke-width=".9">EAHub.cn</text><text transform="translate(308.1 428.0) rotate(-32.8)" fill="#fff" fill-opacity=".3" stroke="#8a8a8a" stroke-opacity=".42" stroke-width=".9">EAHub.cn</text><text transform="translate(558.1 428.0) rotate(-32.8)" fill="#fff" fill-opacity=".3" stroke="#8a8a8a" stroke-opacity=".42" stroke-width=".9">EAHub.cn</text><text transform="translate(808.1 428.0) rotate(-32.8)" fill="#fff" fill-opacity=".3" stroke="#8a8a8a" stroke-opacity=".42" stroke-width=".9">EAHub.cn</text><text transform="translate(1058.1 428.0) rotate(-32.8)" fill="#fff" fill-opacity=".3" stroke="#8a8a8a" stroke-opacity=".42" stroke-width=".9">EAHub.cn</text><text transform="translate(1308.1 428.0) rotate(-32.8)" fill="#fff" fill-opacity=".3" stroke="#8a8a8a" stroke-opacity=".42" stroke-width=".9">EAHub.cn</text><text transform="translate(1558.1 428.0) rotate(-32.8)" fill="#fff" fill-opacity=".3" stroke="#8a8a8a" stroke-opacity=".42" stroke-width=".9">EAHub.cn</text><text transform="translate(1808.1 428.0) rotate(-32.8)" fill="#fff" fill-opacity=".3" stroke="#8a8a8a" stroke-opacity=".42" stroke-width=".9">EAHub.cn</text><text transform="translate(-191.9 678.0) rotate(-32.8)" fill="#fff" fill-opacity=".3" stroke="#8a8a8a" stroke-opacity=".42" stroke-width=".9">EAHub.cn</text><text transform="translate(58.1 678.0) rotate(-32.8)" fill="#fff" fill-opacity=".3" stroke="#8a8a8a" stroke-opacity=".42" stroke-width=".9">EAHub.cn</text><text transform="translate(308.1 678.0) rotate(-32.8)" fill="#fff" fill-opacity=".3" stroke="#8a8a8a" stroke-opacity=".42" stroke-width=".9">EAHub.cn</text><text transform="translate(558.1 678.0) rotate(-32.8)" fill="#fff" fill-opacity=".3" stroke="#8a8a8a" stroke-opacity=".42" stroke-width=".9">EAHub.cn</text><text transform="translate(808.1 678.0) rotate(-32.8)" fill="#fff" fill-opacity=".3" stroke="#8a8a8a" stroke-opacity=".42" stroke-width=".9">EAHub.cn</text><text transform="translate(1058.1 678.0) rotate(-32.8)" fill="#fff" fill-opacity=".3" stroke="#8a8a8a" stroke-opacity=".42" stroke-width=".9">EAHub.cn</text><text transform="translate(1308.1 678.0) rotate(-32.8)" fill="#fff" fill-opacity=".3" stroke="#8a8a8a" stroke-opacity=".42" stroke-width=".9">EAHub.cn</text><text transform="translate(1558.1 678.0) rotate(-32.8)" fill="#fff" fill-opacity=".3" stroke="#8a8a8a" stroke-opacity=".42" stroke-width=".9">EAHub.cn</text><text transform="translate(1808.1 678.0) rotate(-32.8)" fill="#fff" fill-opacity=".3" stroke="#8a8a8a" stroke-opacity=".42" stroke-width=".9">EAHub.cn</text><text transform="translate(-191.9 928.0) rotate(-32.8)" fill="#fff" fill-opacity=".3" stroke="#8a8a8a" stroke-opacity=".42" stroke-width=".9">EAHub.cn</text><text transform="translate(58.1 928.0) rotate(-32.8)" fill="#fff" fill-opacity=".3" stroke="#8a8a8a" stroke-opacity=".42" stroke-width=".9">EAHub.cn</text><text transform="translate(308.1 928.0) rotate(-32.8)" fill="#fff" fill-opacity=".3" stroke="#8a8a8a" stroke-opacity=".42" stroke-width=".9">EAHub.cn</text><text transform="translate(558.1 928.0) rotate(-32.8)" fill="#fff" fill-opacity=".3" stroke="#8a8a8a" stroke-opacity=".42" stroke-width=".9">EAHub.cn</text><text transform="translate(808.1 928.0) rotate(-32.8)" fill="#fff" fill-opacity=".3" stroke="#8a8a8a" stroke-opacity=".42" stroke-width=".9">EAHub.cn</text><text transform="translate(1058.1 928.0) rotate(-32.8)" fill="#fff" fill-opacity=".3" stroke="#8a8a8a" stroke-opacity=".42" stroke-width=".9">EAHub.cn</text><text transform="translate(1308.1 928.0) rotate(-32.8)" fill="#fff" fill-opacity=".3" stroke="#8a8a8a" stroke-opacity=".42" stroke-width=".9">EAHub.cn</text><text transform="translate(1558.1 928.0) rotate(-32.8)" fill="#fff" fill-opacity=".3" stroke="#8a8a8a" stroke-opacity=".42" stroke-width=".9">EAHub.cn</text><text transform="translate(1808.1 928.0) rotate(-32.8)" fill="#fff" fill-opacity=".3" stroke="#8a8a8a" stroke-opacity=".42" stroke-width=".9">EAHub.cn</text></svg></div>
</div></body></html>
